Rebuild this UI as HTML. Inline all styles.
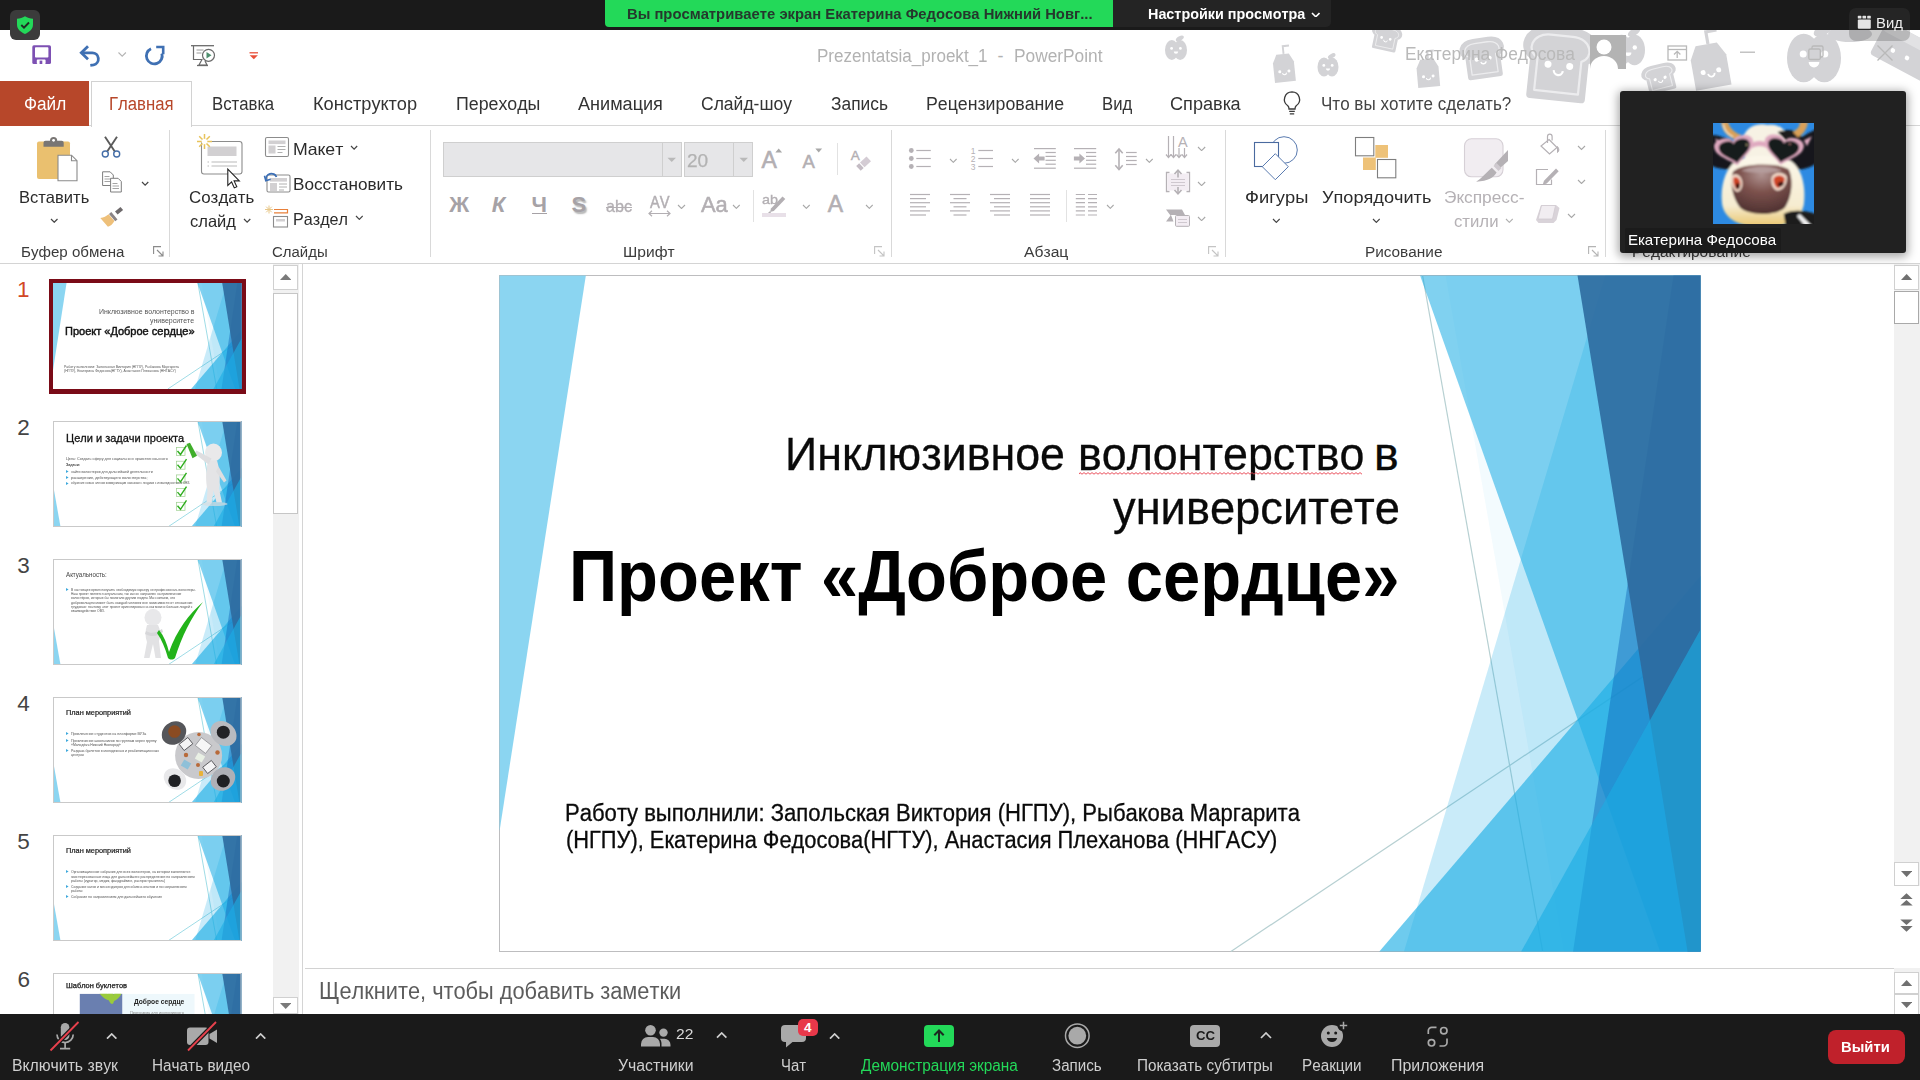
<!DOCTYPE html>
<html lang="ru"><head><meta charset="utf-8"><title>Zoom - PowerPoint</title>
<style>
html,body{margin:0;padding:0;background:#fff;}
body{width:1920px;height:1080px;overflow:hidden;position:relative;font-family:"Liberation Sans",sans-serif;}
.t{position:absolute;white-space:nowrap;line-height:1;transform-origin:0 0;font-kerning:none;}

</style></head><body>
<div id="ppt-head"><svg style="position:absolute;left:0.0px;top:30.0px;" width="1920" height="95" viewBox="0 30 1920 95"><g fill="#d3d3d6"><ellipse cx="1171.8" cy="50.0" rx="6.8" ry="9.9"/><ellipse cx="1180.2" cy="50.0" rx="6.8" ry="9.9"/><ellipse cx="1179.8" cy="38.5" rx="4.4" ry="2.2" transform="rotate(-30 1179.8 38.5)"/></g><g fill="#fff"><circle cx="1171.6" cy="48.4" r="1.4"/><circle cx="1180.4" cy="48.4" r="1.4"/><path d="M1173.8 51.6 a2.2 2.2 0 0 0 4.4 0" /></g><g transform="rotate(-6 1284 68)"><path d="M1273.5 62.4 L1277.7 54.0 L1290.3 54.0 L1294.5 62.4 L1294.5 82.0 L1273.5 82.0 Z" fill="#d3d3d6"/><path d="M1285.0 54.0 L1285.0 46.2 L1291.3 46.2" fill="none" stroke="#d3d3d6" stroke-width="1.9"/><circle cx="1279.4" cy="71.4" r="1.5" fill="#fff"/><circle cx="1288.6" cy="71.4" r="1.5" fill="#fff"/><path d="M1282.1 72.8 a1.9 1.9 0 0 0 3.8 0" fill="none" stroke="#fff" stroke-width="1.1"/></g><g fill="#d3d3d6"><ellipse cx="1324.0" cy="67.0" rx="6.5" ry="9.5"/><ellipse cx="1332.0" cy="67.0" rx="6.5" ry="9.5"/><ellipse cx="1331.7" cy="56.0" rx="4.2" ry="2.1" transform="rotate(-30 1331.7 56.0)"/></g><g fill="#fff"><circle cx="1323.8" cy="65.4" r="1.4"/><circle cx="1332.2" cy="65.4" r="1.4"/><path d="M1325.9 68.6 a2.1 2.1 0 0 0 4.2 0" /></g><g transform="rotate(12 1386 38)"><path d="M1375.6 49.0 L1375.6 36.2 C1369.9 34.5 1371.4 27.0 1380.8 27.0 L1391.2 27.0 C1400.6 27.0 1402.1 34.5 1396.4 36.2 L1396.4 49.0 Z" fill="#d3d3d6" stroke="#d3d3d6" stroke-width="3.1" stroke-linejoin="round"/><path d="M1377.1 47.5 L1377.1 36.5 C1372.1 35.0 1373.5 28.5 1381.5 28.5 L1390.5 28.5 C1398.5 28.5 1399.9 35.0 1394.9 36.5 L1394.9 47.5 Z" fill="none" stroke="#ececee" stroke-width="0.9" stroke-linejoin="round"/><circle cx="1381.6" cy="38.4" r="1.4" fill="#fff"/><circle cx="1390.4" cy="38.4" r="1.4" fill="#fff"/><path d="M1384.2 40.2 a1.8 1.8 0 0 0 3.6 0" fill="none" stroke="#fff" stroke-width="0.9"/></g><g transform="rotate(-5 1428 73)"><path d="M1417.0 67.4 L1421.4 59.0 L1434.6 59.0 L1439.0 67.4 L1439.0 87.0 L1417.0 87.0 Z" fill="#d3d3d6"/><path d="M1429.1 59.0 L1429.1 51.2 L1435.7 51.2" fill="none" stroke="#d3d3d6" stroke-width="2.0"/><circle cx="1423.2" cy="76.4" r="1.5" fill="#fff"/><circle cx="1432.8" cy="76.4" r="1.5" fill="#fff"/><path d="M1426.0 77.8 a2.0 2.0 0 0 0 4.0 0" fill="none" stroke="#fff" stroke-width="1.1"/></g><g transform="rotate(-8 1483 58)"><path d="M1467.8 76.0 L1467.8 55.1 C1459.4 52.2 1461.7 40.0 1475.4 40.0 L1490.6 40.0 C1504.3 40.0 1506.6 52.2 1498.2 55.1 L1498.2 76.0 Z" fill="#d3d3d6" stroke="#d3d3d6" stroke-width="4.6" stroke-linejoin="round"/><path d="M1469.9 73.5 L1469.9 55.5 C1462.7 53.0 1464.7 42.5 1476.5 42.5 L1489.5 42.5 C1501.3 42.5 1503.3 53.0 1496.1 55.5 L1496.1 73.5 Z" fill="none" stroke="#ececee" stroke-width="1.3" stroke-linejoin="round"/><circle cx="1476.5" cy="58.7" r="2.1" fill="#fff"/><circle cx="1489.5" cy="58.7" r="2.1" fill="#fff"/><path d="M1480.3 61.6 a2.7 2.7 0 0 0 5.3 0" fill="none" stroke="#fff" stroke-width="1.3"/></g><g transform="rotate(6 1559 64)"><path d="M1533.4 97.0 L1533.4 58.7 C1519.3 53.4 1523.2 31.0 1546.2 31.0 L1571.8 31.0 C1594.8 31.0 1598.7 53.4 1584.6 58.7 L1584.6 97.0 Z" fill="#d3d3d6" stroke="#d3d3d6" stroke-width="7.7" stroke-linejoin="round"/><path d="M1537.0 92.4 L1537.0 59.5 C1524.9 54.9 1528.2 35.6 1548.0 35.6 L1570.0 35.6 C1589.8 35.6 1593.1 54.9 1581.0 59.5 L1581.0 92.4 Z" fill="none" stroke="#ececee" stroke-width="2.2" stroke-linejoin="round"/><circle cx="1548.1" cy="65.3" r="3.5" fill="#fff"/><circle cx="1569.9" cy="65.3" r="3.5" fill="#fff"/><path d="M1554.5 70.6 a4.5 4.5 0 0 0 9.0 0" fill="none" stroke="#fff" stroke-width="2.2"/></g><g fill="#d3d3d6"><ellipse cx="1621.5" cy="50.0" rx="10.5" ry="15.3"/><ellipse cx="1634.5" cy="50.0" rx="10.5" ry="15.3"/><ellipse cx="1634.0" cy="32.1" rx="6.8" ry="3.4" transform="rotate(-30 1634.0 32.1)"/></g><g fill="#fff"><circle cx="1621.2" cy="47.5" r="2.2"/><circle cx="1634.8" cy="47.5" r="2.2"/><path d="M1624.6 52.5 a3.4 3.4 0 0 0 6.8 0" /></g><g transform="rotate(-14 1660 78)"><path d="M1648.0 90.0 L1648.0 76.1 C1641.4 74.2 1643.2 66.0 1654.0 66.0 L1666.0 66.0 C1676.8 66.0 1678.6 74.2 1672.0 76.1 L1672.0 90.0 Z" fill="#d3d3d6" stroke="#d3d3d6" stroke-width="3.6" stroke-linejoin="round"/><path d="M1649.7 88.3 L1649.7 76.3 C1644.0 74.7 1645.6 67.7 1654.8 67.7 L1665.2 67.7 C1674.4 67.7 1676.0 74.7 1670.3 76.3 L1670.3 88.3 Z" fill="none" stroke="#ececee" stroke-width="1.1" stroke-linejoin="round"/><circle cx="1654.9" cy="78.5" r="1.6" fill="#fff"/><circle cx="1665.1" cy="78.5" r="1.6" fill="#fff"/><path d="M1657.9 80.4 a2.1 2.1 0 0 0 4.2 0" fill="none" stroke="#fff" stroke-width="1.1"/></g><g transform="rotate(-10 1710 66)"><path d="M1692.0 57.2 L1699.2 44.0 L1720.8 44.0 L1728.0 57.2 L1728.0 88.0 L1692.0 88.0 Z" fill="#d3d3d6"/><path d="M1711.8 44.0 L1711.8 31.7 L1722.6 31.7" fill="none" stroke="#d3d3d6" stroke-width="3.2"/><circle cx="1702.1" cy="71.3" r="2.5" fill="#fff"/><circle cx="1717.9" cy="71.3" r="2.5" fill="#fff"/><path d="M1706.8 73.5 a3.2 3.2 0 0 0 6.5 0" fill="none" stroke="#fff" stroke-width="1.8"/></g><g fill="#d3d3d6"><ellipse cx="1803.7" cy="58.0" rx="16.7" ry="24.3"/><ellipse cx="1824.3" cy="58.0" rx="16.7" ry="24.3"/><ellipse cx="1823.5" cy="29.6" rx="10.8" ry="5.4" transform="rotate(-30 1823.5 29.6)"/></g><g fill="#fff"><circle cx="1803.2" cy="54.0" r="3.5"/><circle cx="1824.8" cy="54.0" r="3.5"/><path d="M1808.6 62.0 a5.4 5.4 0 0 0 10.8 0" /></g><g transform="rotate(28 1900 52)"><rect x="1874" y="30" width="62" height="38" rx="4" fill="#d3d3d6"/><rect x="1874" y="30" width="62" height="11" rx="4" fill="#e2e2e4"/><circle cx="1893" cy="54" r="2.300" fill="#fff"/><circle cx="1909" cy="54" r="2.300" fill="#fff"/></g><ellipse cx="1850" cy="34" rx="22" ry="8" fill="#d3d3d6"/></svg><svg style="position:absolute;left:0.0px;top:40.0px;" width="270" height="30" viewBox="0 40 270 30"><rect x="32.3" y="45.300" width="18.700" height="18.700" rx="1.600" fill="#7d50b3"/><rect x="35" y="47.300" width="13.400" height="10.300" rx="0.800" fill="#fff"/><rect x="36.800" y="59.600" width="8.800" height="4.400" rx="0.800" fill="#fff"/><rect x="39.600" y="60.600" width="2.700" height="3.400" fill="#7d50b3"/><path d="M82 52.800 H92.300 a6.100 6.100 0 0 1 1.300 12.050 l-3.300 0.450" fill="none" stroke="#3f70b3" stroke-width="2.800"/><path d="M88 46.300 L81.300 52.800 L88 59.300" fill="none" stroke="#3f70b3" stroke-width="2.800"/><path d="M118.500 52.500 l3.700 3.700 l3.700 -3.700" fill="none" stroke="#b4b4b4" stroke-width="1.100"/><path d="M151 48.800 a7.900 7.900 0 1 0 10.800 4.700" fill="none" stroke="#3f70b3" stroke-width="2.800"/><path d="M156.200 47 H163.200 V54.200" fill="none" stroke="#3f70b3" stroke-width="2.600"/><path d="M191 45.7 h23" stroke="#6a6a6a" stroke-width="1.3"/><path d="M193.5 46 v13.5 h9" fill="none" stroke="#6a6a6a" stroke-width="1.2"/><path d="M196.5 50 h7 M196.5 53 h5" stroke="#9a9a9a" stroke-width="1"/><circle cx="208.5" cy="55.3" r="6" fill="#fff" stroke="#6a6a6a" stroke-width="1.2"/><path d="M206.5 52 l5 3.3 l-5 3.3z" fill="#4e8f6e"/><path d="M202 59.5 l-3 5.5 h8 l-2 -4" fill="none" stroke="#6a6a6a" stroke-width="1.2"/><path d="M197 65.5 h11" stroke="#6a6a6a" stroke-width="1.3"/><path d="M249.5 52.8 h8.5" stroke="#e8503a" stroke-width="1.3"/><path d="M249.7 55.3 h8.2 l-4.1 4z" fill="#e8503a"/></svg><span class="t" style="left:816.5px;top:47.0px;font-size:18px;color:#b2b2b2;font-weight:400;font-family:'Liberation Sans', sans-serif;transform:scaleX(0.9471);">Prezentatsia_proekt_1</span><span class="t" style="left:996.7px;top:47.0px;font-size:18px;color:#b2b2b2;font-weight:400;font-family:'Liberation Sans', sans-serif;transform:translateX(0.79px);">-</span><span class="t" style="left:1014.3px;top:47.0px;font-size:18px;color:#b2b2b2;font-weight:400;font-family:'Liberation Sans', sans-serif;transform:scaleX(0.9617);">PowerPoint</span><span class="t" style="left:1404.6px;top:45.0px;font-size:18px;color:#b9b9b9;font-weight:400;font-family:'Liberation Sans', sans-serif;transform:scaleX(0.9658);">Екатерина Федосова</span><svg style="position:absolute;left:1590.0px;top:35.0px;" width="36" height="34" viewBox="0 0 36 34"><rect width="36" height="34" fill="#b3b3b3"/><circle cx="14" cy="12" r="7.5" fill="#fff"/><path d="M0 34 a14 13 0 0 1 28 0 z" fill="#fff"/></svg><svg style="position:absolute;left:1660.0px;top:40.0px;" width="240" height="26" viewBox="1660 40 240 26"><g fill="none" stroke="#b9b9b9" stroke-width="1.3"><rect x="1668" y="46" width="18.5" height="14"/><path d="M1668 49.5 h18.5"/><path d="M1677.2 58 v-6.5 M1674 54.5 l3.2 -3.2 l3.2 3.2"/><path d="M1740 52.2 h15"/><rect x="1808.8" y="49" width="11.5" height="10.5" rx="1.5"/><path d="M1812 49 v-1.5 a1.5 1.5 0 0 1 1.5 -1.5 h8 a1.5 1.5 0 0 1 1.5 1.5 v8 a1.5 1.5 0 0 1 -1.5 1.5 h-1.2"/><path d="M1877.5 45.5 l15 15 M1892.5 45.5 l-15 15"/></g></svg><div style="position:absolute;left:0.0px;top:125.0px;width:1920.0px;height:1.0px;background:#d6d6d6"></div><div style="position:absolute;left:0.0px;top:81.0px;width:89.0px;height:44.5px;background:#b7472a"></div><span class="t" style="left:23.7px;top:95.0px;font-size:18px;color:#fff;font-weight:400;font-family:'Liberation Sans', sans-serif;transform:scaleX(0.9541);">Файл</span><div style="position:absolute;left:91.0px;top:81.0px;width:100.5px;height:45.5px;background:#fff;border:1px solid #d2d2d2;border-bottom:none;box-sizing:border-box"></div><span class="t" style="left:108.5px;top:95.0px;font-size:18px;color:#b7472a;font-weight:400;font-family:'Liberation Sans', sans-serif;transform:scaleX(0.9283);">Главная</span><span class="t" style="left:211.9px;top:95.0px;font-size:18px;color:#333;font-weight:400;font-family:'Liberation Sans', sans-serif;transform:scaleX(0.9310);">Вставка</span><span class="t" style="left:312.7px;top:95.0px;font-size:18px;color:#333;font-weight:400;font-family:'Liberation Sans', sans-serif;transform:scaleX(1.0124);">Конструктор</span><span class="t" style="left:456.0px;top:95.0px;font-size:18px;color:#333;font-weight:400;font-family:'Liberation Sans', sans-serif;transform:scaleX(0.9880);">Переходы</span><span class="t" style="left:578.3px;top:95.0px;font-size:18px;color:#333;font-weight:400;font-family:'Liberation Sans', sans-serif;transform:scaleX(1.0045);">Анимация</span><span class="t" style="left:701.0px;top:95.0px;font-size:18px;color:#333;font-weight:400;font-family:'Liberation Sans', sans-serif;transform:scaleX(0.9732);">Слайд-шоу</span><span class="t" style="left:830.6px;top:95.0px;font-size:18px;color:#333;font-weight:400;font-family:'Liberation Sans', sans-serif;transform:scaleX(0.9641);">Запись</span><span class="t" style="left:925.9px;top:95.0px;font-size:18px;color:#333;font-weight:400;font-family:'Liberation Sans', sans-serif;transform:scaleX(0.9849);">Рецензирование</span><span class="t" style="left:1101.7px;top:95.0px;font-size:18px;color:#333;font-weight:400;font-family:'Liberation Sans', sans-serif;transform:scaleX(0.9267);">Вид</span><span class="t" style="left:1170.0px;top:95.0px;font-size:18px;color:#333;font-weight:400;font-family:'Liberation Sans', sans-serif;transform:scaleX(1.0069);">Справка</span><svg style="position:absolute;left:1281.0px;top:90.0px;" width="22" height="27" viewBox="0 0 22 27"><path d="M11 1.8 a7.6 7.6 0 0 1 4.2 13.9 c-1 0.9 -1.2 1.8 -1.2 3.3 h-6 c0 -1.5 -0.2 -2.4 -1.2 -3.3 a7.6 7.6 0 0 1 4.2 -13.9z" fill="none" stroke="#3a3a3a" stroke-width="1.3"/><path d="M8.2 21.3 h5.6 M8.8 23.8 h4.4" stroke="#3a3a3a" stroke-width="1.3"/></svg><span class="t" style="left:1320.5px;top:95.0px;font-size:18px;color:#444;font-weight:400;font-family:'Liberation Sans', sans-serif;transform:scaleX(0.9467);">Что вы хотите сделать?</span></div>
<div id="ribbon-a"><div style="position:absolute;left:0.0px;top:263.0px;width:1920.0px;height:1.0px;background:#d4d4d4"></div><div style="position:absolute;left:169.0px;top:130.0px;width:1.0px;height:127.0px;background:#d9d9d9"></div><div style="position:absolute;left:429.8px;top:130.0px;width:1.0px;height:127.0px;background:#d9d9d9"></div><div style="position:absolute;left:890.8px;top:130.0px;width:1.0px;height:127.0px;background:#d9d9d9"></div><div style="position:absolute;left:1225.0px;top:130.0px;width:1.0px;height:127.0px;background:#d9d9d9"></div><div style="position:absolute;left:1605.0px;top:130.0px;width:1.0px;height:127.0px;background:#d9d9d9"></div><svg style="position:absolute;left:30.0px;top:130.0px;" width="100" height="100" viewBox="30 130 100 100"><rect x="37" y="141.5" width="33" height="37.5" rx="2" fill="#eac06f"/><path d="M43.5 146.7 v-4 a2 2 0 0 1 2 -2 h4.5 a3.6 3.6 0 0 1 7.200 0 h4.500 a2 2 0 0 1 2 2 v4z" fill="#797674"/><circle cx="53.6" cy="140.3" r="1.4" fill="#fff"/><path d="M58 155.2 h13.5 l5.500 5.500 v20 h-19z" fill="#fff" stroke="#8a8a8a" stroke-width="1.1"/><path d="M71.5 155.2 v5.500 h5.500" fill="none" stroke="#8a8a8a" stroke-width="1.1"/><path d="M105 136.8 L114.800 151.500 M117 136.800 L107.200 151.500" stroke="#5a5a5a" stroke-width="1.900"/><circle cx="105.3" cy="154" r="3" fill="none" stroke="#456ea8" stroke-width="1.400"/><circle cx="116.7" cy="154" r="3" fill="none" stroke="#456ea8" stroke-width="1.400"/><path d="M102.6 171.8 h7.500 l3.200 3.200 v10.500 h-10.700z" fill="#fff" stroke="#7e7e7e" stroke-width="1"/><path d="M104.5 176.500 h5 M104.500 179 h6.500 M104.500 181.500 h6.500" stroke="#9a9a9a" stroke-width="0.900"/><path d="M110.6 178.300 h7.500 l3.200 3.200 v10.500 h-10.700z" fill="#fff" stroke="#7e7e7e" stroke-width="1"/><path d="M112.5 183.500 h5 M112.500 186 h6.500 M112.500 188.500 h6.500" stroke="#9a9a9a" stroke-width="0.900"/><path d="M115 211.500 l5.500 -4.600 l2.600 3.100 l-5.500 4.600z" fill="#6e6a6c"/><path d="M111.300 212 l6.200 7.400 l-2.300 1.900 l-6.200 -7.400z" fill="#8a8486"/><path d="M108.600 214.200 l5.800 6.900 c-2 3.500 -4 5 -6.500 5.600 l-7.600 -8.700 c3.500 -0.500 6 -1.800 8.300 -3.800z" fill="#eec07a"/></svg><span class="t" style="left:19.1px;top:189.0px;font-size:16.5px;color:#2b2b2b;font-weight:400;font-family:'Liberation Sans', sans-serif;transform:scaleX(1.0016);">Вставить</span><svg style="position:absolute;left:50.0px;top:217.7px;" width="8.5" height="5.25" viewBox="0 0 8.5 5.25"><path d="M1 1 L4.25 4.25 L7.50 1" fill="none" stroke="#444" stroke-width="1.2"/></svg><svg style="position:absolute;left:140.7px;top:180.7px;" width="8.300000000000011" height="5.150000000000006" viewBox="0 0 8.300000000000011 5.150000000000006"><path d="M1 1 L4.15 4.15 L7.30 1" fill="none" stroke="#444" stroke-width="1.2"/></svg><span class="t" style="left:20.8px;top:244.0px;font-size:15.5px;color:#3b3b3b;font-weight:400;font-family:'Liberation Sans', sans-serif;transform:scaleX(0.9746);">Буфер обмена</span><svg style="position:absolute;left:152.5px;top:246.0px;" width="12" height="11" viewBox="0 0 12 11"><path d="M0.6 8 V0.6 H8" fill="none" stroke="#8a8a8a" stroke-width="1.1"/><path d="M4 4 L10 10 M10 5.5 V10 H5.5" fill="none" stroke="#8a8a8a" stroke-width="1.1"/></svg><svg style="position:absolute;left:190.0px;top:130.0px;" width="110" height="100" viewBox="190 130 110 100"><rect x="201.500" y="141.500" width="40.500" height="32.500" rx="2.500" fill="#fff" stroke="#8c8c8c" stroke-width="1.100"/><rect x="207.500" y="146.500" width="29" height="9.500" fill="#d2d0d2"/><path d="M207.500 162 h1.500 M211.500 162 h25.500 M207.500 166 h1.500 M211.500 166 h25.500" stroke="#b9b9b9" stroke-width="1"/><g stroke="#e8c35a" stroke-width="1.500"><path d="M204.500 134 v15 M197 141.500 h15 M199.200 136.200 l10.600 10.600 M209.800 136.200 l-10.600 10.600"/></g><circle cx="204.500" cy="141.500" r="2.800" fill="#fff"/><rect x="265.5" y="137.5" width="23" height="19" rx="1.500" fill="#fff" stroke="#8c8c8c" stroke-width="1.100"/><rect x="268.5" y="140.5" width="17" height="3.600" fill="#d2d0d2"/><rect x="268.5" y="145.5" width="7" height="8" fill="#d2d0d2"/><path d="M277.5 146.5 h8 M277.5 149.5 h8 M277.5 152.5 h5" stroke="#b0b0b0" stroke-width="1"/><rect x="267.0" y="175.0" width="23" height="17" rx="1.500" fill="#fff" stroke="#8c8c8c" stroke-width="1.100"/><rect x="270.0" y="178.0" width="17" height="3.600" fill="#d2d0d2"/><rect x="270.0" y="183.0" width="7" height="8" fill="#d2d0d2"/><path d="M279.0 184.0 h8 M279.0 187.0 h8 M279.0 190.0 h5" stroke="#b0b0b0" stroke-width="1"/><path d="M266 180 a5.500 5.500 0 0 1 10.500 -3" fill="none" stroke="#3c6fb5" stroke-width="1.800"/><path d="M264.500 175.800 l1.300 5 l4.800 -1.600" fill="none" stroke="#3c6fb5" stroke-width="1.600"/><rect x="273.500" y="216.500" width="14" height="10.500" fill="#fff" stroke="#8c8c8c" stroke-width="1.100"/><rect x="276" y="219" width="9" height="2.500" fill="#d2d0d2"/><path d="M274 209.500 h13.500 v3.300 h-13.500" fill="none" stroke="#e8803a" stroke-width="1.200"/><g stroke="#e8c88a" stroke-width="1"><path d="M269 205.500 v8 M265 209.500 h8 M266.200 206.700 l5.600 5.600 M271.800 206.700 l-5.600 5.600"/></g><path d="M227.800 169 v16.500 l3.800 -3.600 l2.700 6 l2.500 -1.100 l-2.700 -5.900 h5.200z" fill="#fff" stroke="#222" stroke-width="1.100"/></svg><span class="t" style="left:188.6px;top:189.0px;font-size:16.5px;color:#2b2b2b;font-weight:400;font-family:'Liberation Sans', sans-serif;transform:scaleX(1.0252);">Создать</span><span class="t" style="left:189.9px;top:213.0px;font-size:16.5px;color:#2b2b2b;font-weight:400;font-family:'Liberation Sans', sans-serif;transform:scaleX(1.0003);">слайд</span><svg style="position:absolute;left:242.7px;top:217.7px;" width="8.300000000000011" height="5.150000000000006" viewBox="0 0 8.300000000000011 5.150000000000006"><path d="M1 1 L4.15 4.15 L7.30 1" fill="none" stroke="#444" stroke-width="1.2"/></svg><span class="t" style="left:293.3px;top:141.0px;font-size:16.5px;color:#2b2b2b;font-weight:400;font-family:'Liberation Sans', sans-serif;transform:scaleX(1.0727);">Макет</span><svg style="position:absolute;left:349.8px;top:145.2px;" width="8.199999999999989" height="5.099999999999994" viewBox="0 0 8.199999999999989 5.099999999999994"><path d="M1 1 L4.10 4.10 L7.20 1" fill="none" stroke="#444" stroke-width="1.2"/></svg><span class="t" style="left:293.3px;top:176.0px;font-size:16.5px;color:#2b2b2b;font-weight:400;font-family:'Liberation Sans', sans-serif;transform:scaleX(1.0388);">Восстановить</span><span class="t" style="left:293.3px;top:211.0px;font-size:16.5px;color:#2b2b2b;font-weight:400;font-family:'Liberation Sans', sans-serif;transform:scaleX(0.9788);">Раздел</span><svg style="position:absolute;left:354.8px;top:215.1px;" width="8.699999999999989" height="5.349999999999994" viewBox="0 0 8.699999999999989 5.349999999999994"><path d="M1 1 L4.35 4.35 L7.70 1" fill="none" stroke="#444" stroke-width="1.2"/></svg><span class="t" style="left:271.6px;top:244.0px;font-size:15.5px;color:#3b3b3b;font-weight:400;font-family:'Liberation Sans', sans-serif;transform:scaleX(0.9639);">Слайды</span><div style="position:absolute;left:443.0px;top:142.0px;width:238.7px;height:34.7px;background:#e6e6e8;border:1px solid #cfcfcf;box-sizing:border-box"></div><div style="position:absolute;left:662.0px;top:143.0px;width:1.0px;height:32.7px;background:#cfcfcf"></div><div style="position:absolute;left:684.2px;top:142.0px;width:68.6px;height:34.7px;background:#e6e6e8;border:1px solid #cfcfcf;box-sizing:border-box"></div><div style="position:absolute;left:733.3px;top:143.0px;width:1.0px;height:32.7px;background:#cfcfcf"></div><svg style="position:absolute;left:667.0px;top:157.0px;" width="10" height="6" viewBox="0 0 10 6"><path d="M0.500 0.800 h8.500 l-4.250 4.300z" fill="#b9b9b9"/></svg><svg style="position:absolute;left:738.5px;top:157.0px;" width="10" height="6" viewBox="0 0 10 6"><path d="M0.500 0.800 h8.500 l-4.250 4.300z" fill="#b9b9b9"/></svg><span class="t" style="left:686.5px;top:152.0px;font-size:18px;color:#b2b2b2;font-weight:400;font-family:'Liberation Sans', sans-serif;transform:scaleX(1.0590);-webkit-text-stroke:0.25px #b2b2b2;">20</span><span class="t" style="left:759.7px;top:149.0px;font-size:23px;color:#b3afb3;font-weight:400;font-family:'Liberation Sans', sans-serif;transform:translateX(1.77px);-webkit-text-stroke:0.6px #b3afb3;">A</span><svg style="position:absolute;left:775.0px;top:147.5px;" width="8" height="5" viewBox="0 0 8 5"><path d="M0.300 4.500 l3.400 -4 l3.400 4z" fill="#a8a8a8"/></svg><span class="t" style="left:801.0px;top:153.0px;font-size:18.5px;color:#b3afb3;font-weight:400;font-family:'Liberation Sans', sans-serif;transform:translateX(1.52px);-webkit-text-stroke:0.55px #b3afb3;">A</span><svg style="position:absolute;left:814.5px;top:147.5px;" width="8" height="5" viewBox="0 0 8 5"><path d="M0.300 0.500 h6.800 l-3.400 4z" fill="#a8a8a8"/></svg><div style="position:absolute;left:837.0px;top:143.0px;width:1.0px;height:32.0px;background:#e2e2e2"></div><span class="t" style="left:849.8px;top:149.0px;font-size:13.5px;color:#b3afb3;font-weight:400;font-family:'Liberation Sans', sans-serif;transform:translateX(0.99px);-webkit-text-stroke:0.4px #b3afb3;">A</span><svg style="position:absolute;left:852.0px;top:153.0px;" width="20" height="18" viewBox="0 0 20 18"><path d="M8 9.500 l6.500 -6 l4.500 4.800 l-6.500 6z" fill="#d4ccd4"/><path d="M7.200 10.300 l-3 2.700 l4.500 4.800 l3 -2.700z" fill="#c4bcc4"/></svg><span class="t" style="left:446.8px;top:194.0px;font-size:22px;color:#a6a2a6;font-weight:700;font-family:'Liberation Sans', sans-serif;transform:translateX(2.36px);">Ж</span><span class="t" style="left:489.6px;top:194.0px;font-size:22px;color:#a6a2a6;font-weight:700;font-family:'Liberation Sans', sans-serif;font-style:italic;transform:translateX(2.16px);">К</span><span class="t" style="left:530.5px;top:194.0px;font-size:22px;color:#a6a2a6;font-weight:700;font-family:'Liberation Sans', sans-serif;transform:translateX(1.01px);">Ч</span><div style="position:absolute;left:531.5px;top:213.0px;width:15.0px;height:1.3px;background:#a6a2a6"></div><span class="t" style="left:571.3px;top:194.0px;font-size:22px;color:#a6a2a6;font-weight:700;font-family:'Liberation Sans', sans-serif;transform:translateX(0.21px);text-shadow:1.5px 1.5px 1.5px rgba(120,120,120,0.55);">S</span><span class="t" style="left:605.8px;top:198.0px;font-size:16.5px;color:#b3afb3;font-weight:400;font-family:'Liberation Sans', sans-serif;transform:scaleX(0.9783);-webkit-text-stroke:0.3px #b3afb3;">abc</span><div style="position:absolute;left:606.0px;top:206.5px;width:26.0px;height:1.1px;background:#b3afb3"></div><span class="t" style="left:649.6px;top:195.0px;font-size:16px;color:#b3afb3;font-weight:400;font-family:'Liberation Sans', sans-serif;transform:scaleX(0.9171);-webkit-text-stroke:0.45px #b3afb3;">AV</span><svg style="position:absolute;left:648.0px;top:210.0px;" width="23" height="7" viewBox="0 0 23 7"><path d="M1 3.500 h21 M4 0.800 l-3 2.700 l3 2.700 M19 0.800 l3 2.700 l-3 2.700" fill="none" stroke="#b3afb3" stroke-width="1.200"/></svg><svg style="position:absolute;left:677.0px;top:203.6px;" width="9" height="5.5" viewBox="0 0 9 5.5"><path d="M1 1 L4.50 4.50 L8.00 1" fill="none" stroke="#a8a8a8" stroke-width="1.1"/></svg><span class="t" style="left:700.5px;top:195.0px;font-size:21.5px;color:#b3afb3;font-weight:400;font-family:'Liberation Sans', sans-serif;transform:scaleX(1.0179);-webkit-text-stroke:0.5px #b3afb3;">Aa</span><svg style="position:absolute;left:732.0px;top:203.6px;" width="8.700000000000045" height="5.350000000000023" viewBox="0 0 8.700000000000045 5.350000000000023"><path d="M1 1 L4.35 4.35 L7.70 1" fill="none" stroke="#a8a8a8" stroke-width="1.1"/></svg><div style="position:absolute;left:753.0px;top:190.0px;width:1.0px;height:32.0px;background:#e2e2e2"></div><span class="t" style="left:761.8px;top:193.0px;font-size:13.5px;color:#b3afb3;font-weight:400;font-family:'Liberation Sans', sans-serif;transform:scaleX(1.0657);-webkit-text-stroke:0.35px #b3afb3;">ab</span><svg style="position:absolute;left:764.0px;top:194.0px;" width="24" height="24" viewBox="0 0 24 24"><path d="M18.500 2.500 l2.800 2.500 l-11.500 12 l-3.800 1 l1 -3.500z" fill="#b3afb3"/><path d="M5.800 17.200 l-1.800 1.800 h3.200z" fill="#b3afb3"/></svg><div style="position:absolute;left:762.0px;top:213.3px;width:24.0px;height:3.4px;background:#e8e0e8"></div><svg style="position:absolute;left:802.3px;top:203.6px;" width="8.700000000000045" height="5.350000000000023" viewBox="0 0 8.700000000000045 5.350000000000023"><path d="M1 1 L4.35 4.35 L7.70 1" fill="none" stroke="#a8a8a8" stroke-width="1.1"/></svg><span class="t" style="left:826.2px;top:193.0px;font-size:23px;color:#b3afb3;font-weight:400;font-family:'Liberation Sans', sans-serif;transform:translateX(1.66px);-webkit-text-stroke:0.6px #b3afb3;">A</span><svg style="position:absolute;left:864.8px;top:203.6px;" width="8.700000000000045" height="5.350000000000023" viewBox="0 0 8.700000000000045 5.350000000000023"><path d="M1 1 L4.35 4.35 L7.70 1" fill="none" stroke="#a8a8a8" stroke-width="1.1"/></svg><span class="t" style="left:622.8px;top:244.0px;font-size:15.5px;color:#3b3b3b;font-weight:400;font-family:'Liberation Sans', sans-serif;transform:scaleX(1.0060);">Шрифт</span><svg style="position:absolute;left:874.0px;top:246.0px;" width="12" height="11" viewBox="0 0 12 11"><path d="M0.6 8 V0.6 H8" fill="none" stroke="#c4c4c4" stroke-width="1.1"/><path d="M4 4 L10 10 M10 5.5 V10 H5.5" fill="none" stroke="#c4c4c4" stroke-width="1.1"/></svg></div>
<div id="ribbon-b"><svg style="position:absolute;left:900.0px;top:130.0px;" width="300" height="100" viewBox="900 130 300 100"><circle cx="911.3" cy="150.5" r="2.400" fill="#b5b1b5"/><path d="M916.3 150.5 H930.800" stroke="#b5b1b5" stroke-width="1.200"/><circle cx="911.3" cy="158.5" r="2.400" fill="#b5b1b5"/><path d="M916.3 158.5 H930.800" stroke="#b5b1b5" stroke-width="1.200"/><circle cx="911.3" cy="166.5" r="2.400" fill="#b5b1b5"/><path d="M916.3 166.5 H930.800" stroke="#b5b1b5" stroke-width="1.200"/><text x="970.800" y="153.7" font-size="8.500" fill="#b5b1b5" font-family="Liberation Sans, sans-serif">1</text><path d="M978.300 150.5 H993" stroke="#b5b1b5" stroke-width="1.200"/><text x="970.800" y="161.7" font-size="8.500" fill="#b5b1b5" font-family="Liberation Sans, sans-serif">2</text><path d="M978.300 158.5 H993" stroke="#b5b1b5" stroke-width="1.200"/><text x="970.800" y="169.7" font-size="8.500" fill="#b5b1b5" font-family="Liberation Sans, sans-serif">3</text><path d="M978.300 166.5 H993" stroke="#b5b1b5" stroke-width="1.200"/><path d="M1034 148.6 H1055.8" stroke="#b5b1b5" stroke-width="1.2"/><path d="M1034 168.2 H1055.8" stroke="#b5b1b5" stroke-width="1.2"/><path d="M1045.5 152.5 H1055.8" stroke="#b5b1b5" stroke-width="1.2"/><path d="M1045.5 156.4 H1055.8" stroke="#b5b1b5" stroke-width="1.2"/><path d="M1045.5 160.3 H1055.8" stroke="#b5b1b5" stroke-width="1.2"/><path d="M1045.5 164.2 H1055.8" stroke="#b5b1b5" stroke-width="1.2"/><path d="M1033.500 158.400 l5.600 -5 v3 h5.500 v4 h-5.500 v3z" fill="#b5b1b5"/><path d="M1074 148.6 H1096.2" stroke="#b5b1b5" stroke-width="1.2"/><path d="M1074 168.2 H1096.2" stroke="#b5b1b5" stroke-width="1.2"/><path d="M1086 152.5 H1096.2" stroke="#b5b1b5" stroke-width="1.2"/><path d="M1086 156.4 H1096.2" stroke="#b5b1b5" stroke-width="1.2"/><path d="M1086 160.3 H1096.2" stroke="#b5b1b5" stroke-width="1.2"/><path d="M1086 164.2 H1096.2" stroke="#b5b1b5" stroke-width="1.2"/><path d="M1085 158.400 l-5.600 -5 v3 h-5.500 v4 h5.500 v3z" fill="#b5b1b5"/><path d="M1119 149.500 V169" stroke="#b5b1b5" stroke-width="1.600"/><path d="M1115.300 153.300 l3.700 -4.300 l3.700 4.300 M1115.300 165.200 l3.700 4.300 l3.700 -4.300" fill="none" stroke="#b5b1b5" stroke-width="1.600"/><path d="M1126 152.5 H1136.7" stroke="#b5b1b5" stroke-width="1.2"/><path d="M1126 156.5 H1136.7" stroke="#b5b1b5" stroke-width="1.2"/><path d="M1126 160.5 H1136.7" stroke="#b5b1b5" stroke-width="1.2"/><path d="M1126 164.5 H1136.7" stroke="#b5b1b5" stroke-width="1.2"/><path d="M910 194.5 H930" stroke="#b5b1b5" stroke-width="1.200"/><path d="M950 194.5 H970" stroke="#b5b1b5" stroke-width="1.200"/><path d="M990 194.5 H1010" stroke="#b5b1b5" stroke-width="1.200"/><path d="M1030 194.5 H1050" stroke="#b5b1b5" stroke-width="1.200"/><path d="M1075.800 194.5 H1085 M1088 194.5 H1097" stroke="#b5b1b5" stroke-width="1.200"/><path d="M910 198.6 H926" stroke="#b5b1b5" stroke-width="1.200"/><path d="M953.5 198.6 H966.5" stroke="#b5b1b5" stroke-width="1.200"/><path d="M994 198.6 H1010" stroke="#b5b1b5" stroke-width="1.200"/><path d="M1030 198.6 H1050" stroke="#b5b1b5" stroke-width="1.200"/><path d="M1075.800 198.6 H1085 M1088 198.6 H1097" stroke="#b5b1b5" stroke-width="1.200"/><path d="M910 202.7 H930" stroke="#b5b1b5" stroke-width="1.200"/><path d="M950 202.7 H970" stroke="#b5b1b5" stroke-width="1.200"/><path d="M990 202.7 H1010" stroke="#b5b1b5" stroke-width="1.200"/><path d="M1030 202.7 H1050" stroke="#b5b1b5" stroke-width="1.200"/><path d="M1075.800 202.7 H1085 M1088 202.7 H1097" stroke="#b5b1b5" stroke-width="1.200"/><path d="M910 206.8 H926" stroke="#b5b1b5" stroke-width="1.200"/><path d="M953.5 206.8 H966.5" stroke="#b5b1b5" stroke-width="1.200"/><path d="M994 206.8 H1010" stroke="#b5b1b5" stroke-width="1.200"/><path d="M1030 206.8 H1050" stroke="#b5b1b5" stroke-width="1.200"/><path d="M1075.800 206.8 H1085 M1088 206.8 H1097" stroke="#b5b1b5" stroke-width="1.200"/><path d="M910 210.9 H930" stroke="#b5b1b5" stroke-width="1.200"/><path d="M950 210.9 H970" stroke="#b5b1b5" stroke-width="1.200"/><path d="M990 210.9 H1010" stroke="#b5b1b5" stroke-width="1.200"/><path d="M1030 210.9 H1050" stroke="#b5b1b5" stroke-width="1.200"/><path d="M1075.800 210.9 H1085 M1088 210.9 H1097" stroke="#b5b1b5" stroke-width="1.200"/><path d="M910 215 H926" stroke="#b5b1b5" stroke-width="1.200"/><path d="M953.5 215 H966.5" stroke="#b5b1b5" stroke-width="1.200"/><path d="M994 215 H1010" stroke="#b5b1b5" stroke-width="1.200"/><path d="M1030 215 H1050" stroke="#b5b1b5" stroke-width="1.200"/><path d="M1075.800 215 H1085 M1088 215 H1097" stroke="#b5b1b5" stroke-width="1.200"/><g stroke="#b5b1b5" stroke-width="1.200" fill="none"><path d="M1168.500 136 V157 M1173.500 136 V157 M1179 148 V157 M1184.500 148 V157"/><path d="M1166 154.500 l2.500 3 l2.500 -3 M1171 154.500 l2.500 3 l2.500 -3 M1176.500 154.500 l2.500 3 l2.500 -3 M1182 154.500 l2.500 3 l2.500 -3"/></g><text x="1178" y="146.500" font-size="14.500" fill="#b5b1b5" font-family="Liberation Sans, sans-serif">A</text><path d="M1169.500 172.500 h-3 v19 h3 M1186.500 172.500 h3 v19 h-3" fill="none" stroke="#b5b1b5" stroke-width="1.300"/><rect x="1167.500" y="173.500" width="21" height="17" fill="#f3edf3"/><path d="M1171 179.5 H1185" stroke="#cfc8cf" stroke-width="1"/><path d="M1171 182.5 H1185" stroke="#cfc8cf" stroke-width="1"/><path d="M1171 185.5 H1185" stroke="#cfc8cf" stroke-width="1"/><path d="M1178 170.500 V177.500 M1178 193.500 V187" stroke="#b5b1b5" stroke-width="1.600"/><path d="M1174.500 174 l3.500 -3.800 l3.500 3.800 M1174.500 190 l3.500 3.800 l3.500 -3.800" fill="none" stroke="#b5b1b5" stroke-width="1.600"/><path d="M1166 209.500 h16 l3 5.500 h-14 l2.500 6.500 h-7.500 l4.500 -6z" fill="#b5b1b5"/><rect x="1175.500" y="215.500" width="14" height="10.800" rx="1" fill="#f3edf3" stroke="#b5b1b5" stroke-width="1"/><path d="M1178 219.5 H1187" stroke="#cfc8cf" stroke-width="1"/><path d="M1178 222.5 H1187" stroke="#cfc8cf" stroke-width="1"/></svg><svg style="position:absolute;left:948.7px;top:157.7px;" width="8.599999999999909" height="5.2999999999999545" viewBox="0 0 8.599999999999909 5.2999999999999545"><path d="M1 1 L4.30 4.30 L7.60 1" fill="none" stroke="#a8a8a8" stroke-width="1.1"/></svg><svg style="position:absolute;left:1010.7px;top:157.7px;" width="8.599999999999909" height="5.2999999999999545" viewBox="0 0 8.599999999999909 5.2999999999999545"><path d="M1 1 L4.30 4.30 L7.60 1" fill="none" stroke="#a8a8a8" stroke-width="1.1"/></svg><svg style="position:absolute;left:1144.8px;top:157.6px;" width="8.700000000000045" height="5.350000000000023" viewBox="0 0 8.700000000000045 5.350000000000023"><path d="M1 1 L4.35 4.35 L7.70 1" fill="none" stroke="#a8a8a8" stroke-width="1.1"/></svg><svg style="position:absolute;left:1105.7px;top:203.7px;" width="8.599999999999909" height="5.2999999999999545" viewBox="0 0 8.599999999999909 5.2999999999999545"><path d="M1 1 L4.30 4.30 L7.60 1" fill="none" stroke="#a8a8a8" stroke-width="1.1"/></svg><svg style="position:absolute;left:1196.5px;top:145.5px;" width="9.200000000000045" height="5.600000000000023" viewBox="0 0 9.200000000000045 5.600000000000023"><path d="M1 1 L4.60 4.60 L8.20 1" fill="none" stroke="#a8a8a8" stroke-width="1.1"/></svg><svg style="position:absolute;left:1196.5px;top:180.5px;" width="9.200000000000045" height="5.600000000000023" viewBox="0 0 9.200000000000045 5.600000000000023"><path d="M1 1 L4.60 4.60 L8.20 1" fill="none" stroke="#a8a8a8" stroke-width="1.1"/></svg><svg style="position:absolute;left:1196.5px;top:215.5px;" width="9.200000000000045" height="5.600000000000023" viewBox="0 0 9.200000000000045 5.600000000000023"><path d="M1 1 L4.60 4.60 L8.20 1" fill="none" stroke="#a8a8a8" stroke-width="1.1"/></svg><div style="position:absolute;left:1066.0px;top:190.0px;width:1.0px;height:32.0px;background:#e2e2e2"></div><span class="t" style="left:1023.8px;top:244.0px;font-size:15.5px;color:#3b3b3b;font-weight:400;font-family:'Liberation Sans', sans-serif;transform:scaleX(1.0115);">Абзац</span><svg style="position:absolute;left:1208.3px;top:246.0px;" width="12" height="11" viewBox="0 0 12 11"><path d="M0.6 8 V0.6 H8" fill="none" stroke="#c4c4c4" stroke-width="1.1"/><path d="M4 4 L10 10 M10 5.5 V10 H5.5" fill="none" stroke="#c4c4c4" stroke-width="1.1"/></svg><svg style="position:absolute;left:1240.0px;top:130.0px;" width="330" height="100" viewBox="1240 130 330 100"><circle cx="1284" cy="150" r="13.300" fill="#fff" stroke="#5a7bb0" stroke-width="1"/><rect x="1254.500" y="142.500" width="24" height="24" fill="#fff" stroke="#4a6a9f" stroke-width="1.100"/><path d="M1275.300 153.700 l13 13 l-13 13 l-13 -13z" fill="#fff" stroke="#5a7bb0" stroke-width="1"/><rect x="1375.300" y="145" width="12.700" height="12.800" fill="#eec278"/><rect x="1363" y="157.500" width="12.800" height="12.500" fill="#eec278"/><rect x="1355.500" y="137.500" width="18.300" height="18.300" fill="#fff" stroke="#7e7e7e" stroke-width="1.100"/><rect x="1377.500" y="159.500" width="18.300" height="18.300" fill="#fff" stroke="#7e7e7e" stroke-width="1.100"/><rect x="1464.500" y="138.800" width="38.500" height="38" rx="7" fill="#f1edf1" stroke="#d6d0d6" stroke-width="1.100"/><path d="M1508 150 v11 l-9 8 l-4.500 -4.500z" fill="#b5b1b5"/><path d="M1496.500 163 l5 5 l-3 3 l-5 -5z" fill="#cfc9cf"/><path d="M1491.800 167.700 l4.800 4.800 c-3 5 -8 8.500 -20.500 9.200 c5 -3 8.500 -7.500 15.700 -14z" fill="#b5b1b5"/><path d="M1549 139.500 l8 8 l-7.500 6.500 l-8.500 -8z" fill="#fff" stroke="#b5b1b5" stroke-width="1.200"/><path d="M1547.500 143 v-6.500 a2.300 2.300 0 0 1 4.600 0 v4" fill="none" stroke="#b5b1b5" stroke-width="1.200"/><path d="M1557.500 146.500 c1.800 2.500 1.800 4.500 0 6z" fill="#b5b1b5" stroke="#b5b1b5" stroke-width="1"/><path d="M1548 169.500 h-11.500 v15 h15 v-5" fill="none" stroke="#b5b1b5" stroke-width="1.200"/><path d="M1556 168.500 l2.700 2.700 l-12 12.300 l-4 1.200 l1.300 -4z" fill="#b5b1b5"/><path d="M1541 205 h15 l3.500 3 l-3 12 l-3 3 h-15 l-2.500 -3 z" fill="#d9d3d9"/><path d="M1541.500 205.500 h14 l-3 13.500 h-14.500z" fill="#f1edf1" stroke="#d0cad0" stroke-width="0.800"/></svg><span class="t" style="left:1244.6px;top:189.0px;font-size:16.5px;color:#2b2b2b;font-weight:400;font-family:'Liberation Sans', sans-serif;transform:scaleX(1.1108);">Фигуры</span><svg style="position:absolute;left:1271.8px;top:217.6px;" width="8.700000000000045" height="5.350000000000023" viewBox="0 0 8.700000000000045 5.350000000000023"><path d="M1 1 L4.35 4.35 L7.70 1" fill="none" stroke="#444" stroke-width="1.2"/></svg><span class="t" style="left:1321.6px;top:189.0px;font-size:16.5px;color:#2b2b2b;font-weight:400;font-family:'Liberation Sans', sans-serif;transform:scaleX(1.0991);">Упорядочить</span><svg style="position:absolute;left:1371.8px;top:217.6px;" width="8.700000000000045" height="5.350000000000023" viewBox="0 0 8.700000000000045 5.350000000000023"><path d="M1 1 L4.35 4.35 L7.70 1" fill="none" stroke="#444" stroke-width="1.2"/></svg><span class="t" style="left:1444.1px;top:189.0px;font-size:16.5px;color:#b5b1b5;font-weight:400;font-family:'Liberation Sans', sans-serif;transform:scaleX(1.0495);">Экспресс-</span><span class="t" style="left:1453.8px;top:213.0px;font-size:16.5px;color:#b5b1b5;font-weight:400;font-family:'Liberation Sans', sans-serif;transform:scaleX(1.0140);">стили</span><svg style="position:absolute;left:1504.8px;top:217.6px;" width="8.700000000000045" height="5.350000000000023" viewBox="0 0 8.700000000000045 5.350000000000023"><path d="M1 1 L4.35 4.35 L7.70 1" fill="none" stroke="#b0b0b0" stroke-width="1.1"/></svg><svg style="position:absolute;left:1576.5px;top:145.1px;" width="9.0" height="5.5" viewBox="0 0 9.0 5.5"><path d="M1 1 L4.50 4.50 L8.00 1" fill="none" stroke="#a8a8a8" stroke-width="1.1"/></svg><svg style="position:absolute;left:1576.5px;top:178.9px;" width="9.0" height="5.5" viewBox="0 0 9.0 5.5"><path d="M1 1 L4.50 4.50 L8.00 1" fill="none" stroke="#a8a8a8" stroke-width="1.1"/></svg><svg style="position:absolute;left:1567.0px;top:213.1px;" width="9" height="5.5" viewBox="0 0 9 5.5"><path d="M1 1 L4.50 4.50 L8.00 1" fill="none" stroke="#a8a8a8" stroke-width="1.1"/></svg><span class="t" style="left:1364.6px;top:244.0px;font-size:15.5px;color:#3b3b3b;font-weight:400;font-family:'Liberation Sans', sans-serif;transform:scaleX(0.9924);">Рисование</span><svg style="position:absolute;left:1588.3px;top:246.0px;" width="12" height="11" viewBox="0 0 12 11"><path d="M0.6 8 V0.6 H8" fill="none" stroke="#b4b4b4" stroke-width="1.1"/><path d="M4 4 L10 10 M10 5.5 V10 H5.5" fill="none" stroke="#b4b4b4" stroke-width="1.1"/></svg><span class="t" style="left:1632.1px;top:244.0px;font-size:15.5px;color:#3b3b3b;font-weight:400;font-family:'Liberation Sans', sans-serif;transform:scaleX(0.9975);">Редактирование</span></div>
<div id="thumbs"><div style="position:absolute;left:273.0px;top:264.0px;width:26.0px;height:750.0px;background:#f1f1f1"></div><div style="position:absolute;left:302.0px;top:264.0px;width:1.0px;height:750.0px;background:#d4d4d4"></div><div style="position:absolute;left:273.0px;top:265.0px;width:25.0px;height:25.0px;background:#fff;border:1px solid #d0d0d0;box-sizing:border-box"></div><svg style="position:absolute;left:280.0px;top:274.0px;" width="11.4" height="6" viewBox="0 0 11.4 6"><path d="M0 6 L5.700 0 L11.400 6z" fill="#7a7a7a"/></svg><div style="position:absolute;left:273.0px;top:293.0px;width:25.0px;height:220.5px;background:#fff;border:1px solid #c6c6c6;box-sizing:border-box"></div><div style="position:absolute;left:273.0px;top:997.0px;width:25.0px;height:17.0px;background:#fff;border:1px solid #d0d0d0;box-sizing:border-box"></div><svg style="position:absolute;left:280.0px;top:1003.0px;" width="11.4" height="6" viewBox="0 0 11.4 6"><path d="M0 0 L5.700 6 L11.400 0z" fill="#7a7a7a"/></svg><div style="position:absolute;left:48.8px;top:279.0px;width:197.4px;height:115.0px;background:#7a0b17"></div><svg style="position:absolute;left:53.2px;top:283.3px;overflow:hidden" width="188.5" height="106" viewBox="0 0 188.5 106"><rect x="0" y="0" width="188.5" height="106" fill="#fff"/><line x1="144.88" y1="0" x2="163.73" y2="106" stroke="#7fd0dd" stroke-width="0.75"/><line x1="188.44" y1="56.90" x2="114.80" y2="106" stroke="#7fd0dd" stroke-width="0.75"/><polygon points="173.57,0.00 188.50,0.00 188.50,106.00 141.96,106.00" fill="#1cade4" fill-opacity="0.24"/><polygon points="148.48,0.00 188.50,0.00 188.50,106.00 167.07,106.00" fill="#1cade4" fill-opacity="0.05"/><polygon points="188.50,47.11 188.50,106.00 138.10,106.00" fill="#1cade4" fill-opacity="0.64"/><polygon points="144.49,0.00 188.50,0.00 188.50,106.00 182.15,106.00" fill="#1cade4" fill-opacity="0.56"/><polygon points="184.26,0.00 188.50,0.00 188.50,106.00 168.50,106.00" fill="#0c60b4" fill-opacity="0.42"/><polygon points="169.20,0.00 188.50,0.00 188.50,106.00 186.46,106.00" fill="#2e6a9e" fill-opacity="0.9"/><polygon points="188.50,55.49 188.50,106.00 160.36,106.00" fill="#1cade4" fill-opacity="0.62"/><polygon points="0.00,0.00 13.55,0.00 0.00,87.13" fill="#77ceef" fill-opacity="0.85"/></svg><span class="t" style="left:98.6px;top:308.0px;font-size:7.2px;color:#555;font-weight:400;font-family:'Liberation Sans', sans-serif;transform:scaleX(0.9677);">Инклюзивное волонтерство в</span><span class="t" style="left:149.8px;top:317.0px;font-size:7.2px;color:#555;font-weight:400;font-family:'Liberation Sans', sans-serif;transform:scaleX(0.9696);">университете</span><span class="t" style="left:64.5px;top:326.0px;font-size:11.3px;color:#111;font-weight:400;-webkit-text-stroke:0.45px #111;font-family:'Liberation Sans', sans-serif;transform:scaleX(0.9767);">Проект «Доброе сердце»</span><span class="t" style="left:64.0px;top:366.0px;font-size:3.6px;color:#555;font-weight:400;font-family:'Liberation Sans', sans-serif;transform:scaleX(0.9600);">Работу выполнили: Запольская Виктория (НГПУ), Рыбакова Маргарита</span><span class="t" style="left:64.0px;top:370.0px;font-size:3.6px;color:#555;font-weight:400;font-family:'Liberation Sans', sans-serif;transform:scaleX(0.9547);">(НГПУ), Екатерина Федосова(НГТУ), Анастасия Плеханова (ННГАСУ)</span><svg style="position:absolute;left:53.2px;top:421.3px;overflow:hidden" width="188.5" height="106" viewBox="0 0 188.5 106"><rect x="0" y="0" width="188.5" height="106" fill="#fff"/><line x1="144.88" y1="0" x2="163.73" y2="106" stroke="#7fd0dd" stroke-width="0.75"/><line x1="188.44" y1="56.90" x2="114.80" y2="106" stroke="#7fd0dd" stroke-width="0.75"/><polygon points="173.57,0.00 188.50,0.00 188.50,106.00 141.96,106.00" fill="#1cade4" fill-opacity="0.24"/><polygon points="148.48,0.00 188.50,0.00 188.50,106.00 167.07,106.00" fill="#1cade4" fill-opacity="0.05"/><polygon points="188.50,47.11 188.50,106.00 138.10,106.00" fill="#1cade4" fill-opacity="0.64"/><polygon points="144.49,0.00 188.50,0.00 188.50,106.00 182.15,106.00" fill="#1cade4" fill-opacity="0.56"/><polygon points="184.26,0.00 188.50,0.00 188.50,106.00 168.50,106.00" fill="#0c60b4" fill-opacity="0.42"/><polygon points="169.20,0.00 188.50,0.00 188.50,106.00 186.46,106.00" fill="#2e6a9e" fill-opacity="0.9"/><polygon points="188.50,55.49 188.50,106.00 160.36,106.00" fill="#1cade4" fill-opacity="0.62"/><polygon points="0.00,63.60 7.54,106.00 0.00,106.00" fill="#77ceef" fill-opacity="0.85"/><rect x="123.500" y="26.5" width="8.500" height="8" fill="#fff" stroke="#9ccf8e" stroke-width="0.700"/><path d="M124.500 30.0 l3 3.500 l6 -9" fill="none" stroke="#2fae1e" stroke-width="1.400"/><rect x="123.500" y="40.2" width="8.500" height="8" fill="#fff" stroke="#9ccf8e" stroke-width="0.700"/><path d="M124.500 43.7 l3 3.500 l6 -9" fill="none" stroke="#2fae1e" stroke-width="1.400"/><rect x="123.500" y="53.9" width="8.500" height="8" fill="#fff" stroke="#9ccf8e" stroke-width="0.700"/><path d="M124.500 57.4 l3 3.500 l6 -9" fill="none" stroke="#2fae1e" stroke-width="1.400"/><rect x="123.500" y="67.6" width="8.500" height="8" fill="#fff" stroke="#9ccf8e" stroke-width="0.700"/><path d="M124.500 71.1 l3 3.500 l6 -9" fill="none" stroke="#2fae1e" stroke-width="1.400"/><rect x="123.500" y="81.3" width="8.500" height="8" fill="#fff" stroke="#9ccf8e" stroke-width="0.700"/><path d="M124.500 84.8 l3 3.500 l6 -9" fill="none" stroke="#2fae1e" stroke-width="1.400"/><g transform="translate(-4.500,-6.500)"><ellipse cx="165" cy="38" rx="8.500" ry="9" fill="#e9e9ea"/><path d="M160 46 c-3 8 -3 20 -1 30 l-1 12 h5 l2 -12 l3 12 h5.500 l-3 -14 c1.500 -9 1 -18 -2 -28z" fill="#e4e4e6"/><path d="M160 50 l-14 -11 l2 -3 l15 8z" fill="#dedee0"/><path d="M170 52 l8 14 l-2.500 2 l-8 -11z" fill="#dedee0"/><ellipse cx="166" cy="89.500" rx="13" ry="2" fill="#d8dde0" opacity="0.700"/></g><path d="M133.500 23 l3.500 -1.200 l7 13 l-4.500 2.500z" fill="#3fae2a"/><rect x="0.5" y="0.500" width="187.5" height="105" fill="none" stroke="#c9c9c9" stroke-width="1"/></svg><span class="t" style="left:66.0px;top:433.0px;font-size:11.3px;color:#111;font-weight:400;-webkit-text-stroke:0.3px #111;font-family:'Liberation Sans', sans-serif;transform:scaleX(0.9752);">Цели и задачи проекта</span><span class="t" style="left:66.0px;top:458.0px;font-size:3.3px;color:#505050;font-weight:400;font-family:'Liberation Sans', sans-serif;transform:scaleX(1.1356);">Цель:  Создать сферу для социально и нравственно-нного</span><span class="t" style="left:66.0px;top:464.0px;font-size:3.3px;color:#444;font-weight:700;font-family:'Liberation Sans', sans-serif;transform:scaleX(1.0923);">Задачи:</span><span class="t" style="left:71.1px;top:471.0px;font-size:3.3px;color:#505050;font-weight:400;font-family:'Liberation Sans', sans-serif;transform:scaleX(1.0671);">найти волонтеров для дальнейшей деятельности</span><span class="t" style="left:71.1px;top:477.0px;font-size:3.3px;color:#505050;font-weight:400;font-family:'Liberation Sans', sans-serif;transform:scaleX(1.1606);">расширение, действующего волонтерства;</span><span class="t" style="left:71.1px;top:482.0px;font-size:3.3px;color:#505050;font-weight:400;font-family:'Liberation Sans', sans-serif;transform:scaleX(0.9305);">обучение новых членов коммуникации навыкам с людьми с инвалидностью и ОВЗ.</span><svg style="position:absolute;left:66.3px;top:470.0px;" width="3" height="3" viewBox="0 0 3 3"><path d="M0 0 L2.600 1.500 L0 3z" fill="#3fa9dc"/></svg><svg style="position:absolute;left:66.3px;top:476.0px;" width="3" height="3" viewBox="0 0 3 3"><path d="M0 0 L2.600 1.500 L0 3z" fill="#3fa9dc"/></svg><svg style="position:absolute;left:66.3px;top:481.8px;" width="3" height="3" viewBox="0 0 3 3"><path d="M0 0 L2.600 1.500 L0 3z" fill="#3fa9dc"/></svg><svg style="position:absolute;left:53.2px;top:559.3px;overflow:hidden" width="188.5" height="106" viewBox="0 0 188.5 106"><rect x="0" y="0" width="188.5" height="106" fill="#fff"/><line x1="144.88" y1="0" x2="163.73" y2="106" stroke="#7fd0dd" stroke-width="0.75"/><line x1="188.44" y1="56.90" x2="114.80" y2="106" stroke="#7fd0dd" stroke-width="0.75"/><polygon points="173.57,0.00 188.50,0.00 188.50,106.00 141.96,106.00" fill="#1cade4" fill-opacity="0.24"/><polygon points="148.48,0.00 188.50,0.00 188.50,106.00 167.07,106.00" fill="#1cade4" fill-opacity="0.05"/><polygon points="188.50,47.11 188.50,106.00 138.10,106.00" fill="#1cade4" fill-opacity="0.64"/><polygon points="144.49,0.00 188.50,0.00 188.50,106.00 182.15,106.00" fill="#1cade4" fill-opacity="0.56"/><polygon points="184.26,0.00 188.50,0.00 188.50,106.00 168.50,106.00" fill="#0c60b4" fill-opacity="0.42"/><polygon points="169.20,0.00 188.50,0.00 188.50,106.00 186.46,106.00" fill="#2e6a9e" fill-opacity="0.9"/><polygon points="188.50,55.49 188.50,106.00 160.36,106.00" fill="#1cade4" fill-opacity="0.62"/><polygon points="0.00,63.60 7.54,106.00 0.00,106.00" fill="#77ceef" fill-opacity="0.85"/><ellipse cx="100" cy="58.500" rx="8.500" ry="8.500" fill="#e8e8ea"/><path d="M94 66 c-2 6 -2 12 0 17 l-3 16 h5.500 l3.500 -14 l2.500 14 h5.500 l-2 -17 c2 -6 1.500 -11 -1 -16z" fill="#e2e2e4"/><path d="M93 72 c5 3 10 2 16 -2 l1 3 c-6 5 -12 5 -18 2z" fill="#d6d6d9"/><path d="M106 71 c5 6 8 14 10 22 c8 -22 20 -38 34 -50 c-12 16 -21 34 -28 56 c-2 2 -5 2 -7 0 c-3 -10 -6 -18 -11 -25z" fill="#22b31a"/><rect x="0.5" y="0.500" width="187.5" height="105" fill="none" stroke="#c9c9c9" stroke-width="1"/></svg><span class="t" style="left:65.7px;top:572.0px;font-size:6.3px;color:#444;font-weight:400;font-family:'Liberation Sans', sans-serif;transform:scaleX(0.9833);">Актуальность:</span><span class="t" style="left:71.1px;top:589.0px;font-size:3.2px;color:#505050;font-weight:400;font-family:'Liberation Sans', sans-serif;transform:scaleX(1.0089);">В настоящее время получить необходимую карьеру не профессионал- волонтеры.</span><span class="t" style="left:71.1px;top:593.0px;font-size:3.2px;color:#505050;font-weight:400;font-family:'Liberation Sans', sans-serif;transform:scaleX(1.0194);">Наш проект является актуальным, так как он направлен на привлечение</span><span class="t" style="left:71.1px;top:597.0px;font-size:3.2px;color:#505050;font-weight:400;font-family:'Liberation Sans', sans-serif;transform:scaleX(1.0410);">волонтёров, которые бы помогали другим людям. Мы считаем, что</span><span class="t" style="left:71.1px;top:602.0px;font-size:3.2px;color:#505050;font-weight:400;font-family:'Liberation Sans', sans-serif;transform:scaleX(1.0813);">добровольцем может быть каждый человек вне зависимости от отношения</span><span class="t" style="left:71.1px;top:606.0px;font-size:3.2px;color:#505050;font-weight:400;font-family:'Liberation Sans', sans-serif;transform:scaleX(1.0717);">трудовых: поэтому этот проект ориентирован на как можно больше людей с</span><span class="t" style="left:71.1px;top:610.0px;font-size:3.2px;color:#505050;font-weight:400;font-family:'Liberation Sans', sans-serif;transform:scaleX(1.0333);">взаимодействия ОВЗ.</span><svg style="position:absolute;left:66.3px;top:587.6px;" width="3" height="3" viewBox="0 0 3 3"><path d="M0 0 L2.600 1.500 L0 3z" fill="#3fa9dc"/></svg><svg style="position:absolute;left:53.2px;top:697.3px;overflow:hidden" width="188.5" height="106" viewBox="0 0 188.5 106"><rect x="0" y="0" width="188.5" height="106" fill="#fff"/><line x1="144.88" y1="0" x2="163.73" y2="106" stroke="#7fd0dd" stroke-width="0.75"/><line x1="188.44" y1="56.90" x2="114.80" y2="106" stroke="#7fd0dd" stroke-width="0.75"/><polygon points="173.57,0.00 188.50,0.00 188.50,106.00 141.96,106.00" fill="#1cade4" fill-opacity="0.24"/><polygon points="148.48,0.00 188.50,0.00 188.50,106.00 167.07,106.00" fill="#1cade4" fill-opacity="0.05"/><polygon points="188.50,47.11 188.50,106.00 138.10,106.00" fill="#1cade4" fill-opacity="0.64"/><polygon points="144.49,0.00 188.50,0.00 188.50,106.00 182.15,106.00" fill="#1cade4" fill-opacity="0.56"/><polygon points="184.26,0.00 188.50,0.00 188.50,106.00 168.50,106.00" fill="#0c60b4" fill-opacity="0.42"/><polygon points="169.20,0.00 188.50,0.00 188.50,106.00 186.46,106.00" fill="#2e6a9e" fill-opacity="0.9"/><polygon points="188.50,55.49 188.50,106.00 160.36,106.00" fill="#1cade4" fill-opacity="0.62"/><polygon points="0.00,63.60 7.54,106.00 0.00,106.00" fill="#77ceef" fill-opacity="0.85"/><circle cx="145.600" cy="58.500" r="23.500" fill="#c9c9cc"/><ellipse cx="121" cy="36" rx="13" ry="11" fill="#55565a" transform="rotate(-40 121 36)"/><circle cx="121.500" cy="34.500" r="6.300" fill="#8a4b22"/><ellipse cx="170.500" cy="36.500" rx="14" ry="11.500" fill="#b9bbc0" transform="rotate(40 170.500 36.500)"/><circle cx="170.300" cy="35.200" r="6.500" fill="#222326"/><ellipse cx="122" cy="82" rx="12" ry="10" fill="#e8e8ea" transform="rotate(40 122 82)"/><circle cx="121.600" cy="83.700" r="6.300" fill="#1f2023"/><ellipse cx="170" cy="82" rx="13" ry="11" fill="#aeb0b6" transform="rotate(-40 170 82)"/><circle cx="170.300" cy="84" r="6.500" fill="#1f2023"/><rect x="127.500" y="43" width="11" height="8" fill="#f4f4f5" stroke="#4a4a4e" stroke-width="0.800" transform="rotate(-38 133 47)"/><rect x="144" y="43.500" width="13" height="10" fill="#f6f6f6" stroke="#7a7a7e" stroke-width="0.600" transform="rotate(38 150.500 48.500)"/><rect x="151" y="66" width="11" height="8" fill="#f4f4f5" stroke="#4a4a4e" stroke-width="0.800" transform="rotate(-38 156.500 70)"/><rect x="143" y="57" width="8" height="7" fill="#e9f0e4" transform="rotate(30 147 60.500)"/><rect x="129" y="64" width="8" height="7" fill="#8fc0d8" transform="rotate(30 133 67.500)"/><circle cx="133" cy="58" r="2.200" fill="#b86a3a"/><circle cx="145" cy="68" r="2" fill="#b86a3a"/><circle cx="164.500" cy="55.500" r="2.200" fill="#b86a3a"/><circle cx="146" cy="37.500" r="1.800" fill="#b86a3a"/><rect x="146" y="74" width="4" height="5" rx="1" fill="#e8b23a"/><rect x="0.5" y="0.500" width="187.5" height="105" fill="none" stroke="#c9c9c9" stroke-width="1"/></svg><span class="t" style="left:65.7px;top:710.0px;font-size:6.5px;color:#222;font-weight:400;-webkit-text-stroke:0.2px #222;font-family:'Liberation Sans', sans-serif;transform:scaleX(1.1316);">План мероприятий</span><span class="t" style="left:71.1px;top:733.0px;font-size:3.2px;color:#505050;font-weight:400;font-family:'Liberation Sans', sans-serif;transform:scaleX(1.1284);">Привлечение студентов на платформе ВУЗа</span><span class="t" style="left:71.1px;top:740.0px;font-size:3.2px;color:#505050;font-weight:400;font-family:'Liberation Sans', sans-serif;transform:scaleX(1.1347);">Привлечение школьников по группам через группу</span><span class="t" style="left:71.1px;top:744.0px;font-size:3.2px;color:#505050;font-weight:400;font-family:'Liberation Sans', sans-serif;transform:scaleX(1.0674);">«Молодёжь Нижний Новгород»</span><span class="t" style="left:71.1px;top:750.0px;font-size:3.2px;color:#505050;font-weight:400;font-family:'Liberation Sans', sans-serif;transform:scaleX(1.0815);">Раздача буклетов в молодежных и реабилитационных</span><span class="t" style="left:71.1px;top:754.0px;font-size:3.2px;color:#505050;font-weight:400;font-family:'Liberation Sans', sans-serif;transform:scaleX(1.0917);">центрах</span><svg style="position:absolute;left:66.3px;top:732.2px;" width="3" height="3" viewBox="0 0 3 3"><path d="M0 0 L2.600 1.500 L0 3z" fill="#3fa9dc"/></svg><svg style="position:absolute;left:66.3px;top:739.1px;" width="3" height="3" viewBox="0 0 3 3"><path d="M0 0 L2.600 1.500 L0 3z" fill="#3fa9dc"/></svg><svg style="position:absolute;left:66.3px;top:749.3px;" width="3" height="3" viewBox="0 0 3 3"><path d="M0 0 L2.600 1.500 L0 3z" fill="#3fa9dc"/></svg><svg style="position:absolute;left:53.2px;top:835.3px;overflow:hidden" width="188.5" height="106" viewBox="0 0 188.5 106"><rect x="0" y="0" width="188.5" height="106" fill="#fff"/><line x1="144.88" y1="0" x2="163.73" y2="106" stroke="#7fd0dd" stroke-width="0.75"/><line x1="188.44" y1="56.90" x2="114.80" y2="106" stroke="#7fd0dd" stroke-width="0.75"/><polygon points="173.57,0.00 188.50,0.00 188.50,106.00 141.96,106.00" fill="#1cade4" fill-opacity="0.24"/><polygon points="148.48,0.00 188.50,0.00 188.50,106.00 167.07,106.00" fill="#1cade4" fill-opacity="0.05"/><polygon points="188.50,47.11 188.50,106.00 138.10,106.00" fill="#1cade4" fill-opacity="0.64"/><polygon points="144.49,0.00 188.50,0.00 188.50,106.00 182.15,106.00" fill="#1cade4" fill-opacity="0.56"/><polygon points="184.26,0.00 188.50,0.00 188.50,106.00 168.50,106.00" fill="#0c60b4" fill-opacity="0.42"/><polygon points="169.20,0.00 188.50,0.00 188.50,106.00 186.46,106.00" fill="#2e6a9e" fill-opacity="0.9"/><polygon points="188.50,55.49 188.50,106.00 160.36,106.00" fill="#1cade4" fill-opacity="0.62"/><polygon points="0.00,63.60 7.54,106.00 0.00,106.00" fill="#77ceef" fill-opacity="0.85"/><rect x="0.5" y="0.500" width="187.5" height="105" fill="none" stroke="#c9c9c9" stroke-width="1"/></svg><span class="t" style="left:65.7px;top:848.0px;font-size:6.5px;color:#222;font-weight:400;-webkit-text-stroke:0.2px #222;font-family:'Liberation Sans', sans-serif;transform:scaleX(1.1316);">План мероприятий</span><span class="t" style="left:71.1px;top:871.0px;font-size:3.2px;color:#505050;font-weight:400;font-family:'Liberation Sans', sans-serif;transform:scaleX(1.0775);">Организационное собрание для всех волонтеров, на котором выявляются</span><span class="t" style="left:71.1px;top:876.0px;font-size:3.2px;color:#505050;font-weight:400;font-family:'Liberation Sans', sans-serif;transform:scaleX(1.0868);">заинтересованные лица для дальнейшего распределения по направлениям</span><span class="t" style="left:71.1px;top:880.0px;font-size:3.2px;color:#505050;font-weight:400;font-family:'Liberation Sans', sans-serif;transform:scaleX(1.0874);">работы (куратор, медик, фандрайзинг, распространитель)</span><span class="t" style="left:71.1px;top:886.0px;font-size:3.2px;color:#505050;font-weight:400;font-family:'Liberation Sans', sans-serif;transform:scaleX(1.0606);">Создание чатов и мессенджеров для обмена опытом и по направлениям</span><span class="t" style="left:71.1px;top:890.0px;font-size:3.2px;color:#505050;font-weight:400;font-family:'Liberation Sans', sans-serif;transform:scaleX(1.0545);">работы</span><span class="t" style="left:71.1px;top:896.0px;font-size:3.2px;color:#505050;font-weight:400;font-family:'Liberation Sans', sans-serif;transform:scaleX(1.0916);">Собрание по направлениям для дальнейшего обучения</span><svg style="position:absolute;left:66.3px;top:870.2px;" width="3" height="3" viewBox="0 0 3 3"><path d="M0 0 L2.600 1.500 L0 3z" fill="#3fa9dc"/></svg><svg style="position:absolute;left:66.3px;top:885.0px;" width="3" height="3" viewBox="0 0 3 3"><path d="M0 0 L2.600 1.500 L0 3z" fill="#3fa9dc"/></svg><svg style="position:absolute;left:66.3px;top:894.9px;" width="3" height="3" viewBox="0 0 3 3"><path d="M0 0 L2.600 1.500 L0 3z" fill="#3fa9dc"/></svg><svg style="position:absolute;left:53.2px;top:973.3px;overflow:hidden" width="188.5" height="106" viewBox="0 0 188.5 106"><rect x="0" y="0" width="188.5" height="106" fill="#fff"/><line x1="144.88" y1="0" x2="163.73" y2="106" stroke="#7fd0dd" stroke-width="0.75"/><line x1="188.44" y1="56.90" x2="114.80" y2="106" stroke="#7fd0dd" stroke-width="0.75"/><polygon points="173.57,0.00 188.50,0.00 188.50,106.00 141.96,106.00" fill="#1cade4" fill-opacity="0.24"/><polygon points="148.48,0.00 188.50,0.00 188.50,106.00 167.07,106.00" fill="#1cade4" fill-opacity="0.05"/><polygon points="188.50,47.11 188.50,106.00 138.10,106.00" fill="#1cade4" fill-opacity="0.64"/><polygon points="144.49,0.00 188.50,0.00 188.50,106.00 182.15,106.00" fill="#1cade4" fill-opacity="0.56"/><polygon points="184.26,0.00 188.50,0.00 188.50,106.00 168.50,106.00" fill="#0c60b4" fill-opacity="0.42"/><polygon points="169.20,0.00 188.50,0.00 188.50,106.00 186.46,106.00" fill="#2e6a9e" fill-opacity="0.9"/><polygon points="188.50,55.49 188.50,106.00 160.36,106.00" fill="#1cade4" fill-opacity="0.62"/><polygon points="0.00,63.60 7.54,106.00 0.00,106.00" fill="#77ceef" fill-opacity="0.85"/><rect x="26.800" y="20.700" width="42.700" height="90" fill="#6a7fb0"/><rect x="69.500" y="20.700" width="72" height="90" fill="#eef8fc"/><g fill="#9acb3c"><ellipse cx="52" cy="22" rx="3" ry="7.500" transform="rotate(-50 52 22)"/><ellipse cx="58" cy="24" rx="3" ry="7" transform="rotate(-10 58 24)"/><ellipse cx="64" cy="22" rx="3" ry="7.500" transform="rotate(40 64 22)"/></g><rect x="26" y="8" width="118" height="12.700" fill="#fff"/><rect x="0.5" y="0.500" width="187.5" height="105" fill="none" stroke="#c9c9c9" stroke-width="1"/></svg><span class="t" style="left:65.8px;top:983.0px;font-size:6.5px;color:#222;font-weight:400;-webkit-text-stroke:0.25px #222;font-family:'Liberation Sans', sans-serif;transform:scaleX(1.1434);">Шаблон буклетов</span><span class="t" style="left:133.8px;top:998.0px;font-size:7.8px;color:#222;font-weight:700;font-family:'Liberation Sans', sans-serif;transform:scaleX(0.8576);">Доброе сердце</span><span class="t" style="left:130.3px;top:1012.0px;font-size:3.4px;color:#888;font-weight:400;font-family:'Liberation Sans', sans-serif;transform:scaleX(1.1362);">Программа для инклюзивного</span><span class="t" style="left:19.7px;top:279.0px;font-size:22.5px;color:#d24726;font-weight:400;font-family:'Liberation Sans', sans-serif;transform:translateX(-2.60px);">1</span><span class="t" style="left:18.7px;top:417.0px;font-size:22.5px;color:#444;font-weight:400;font-family:'Liberation Sans', sans-serif;transform:translateX(-1.35px);">2</span><span class="t" style="left:18.7px;top:555.0px;font-size:22.5px;color:#444;font-weight:400;font-family:'Liberation Sans', sans-serif;transform:translateX(-1.35px);">3</span><span class="t" style="left:18.2px;top:693.0px;font-size:22.5px;color:#444;font-weight:400;font-family:'Liberation Sans', sans-serif;transform:translateX(-0.85px);">4</span><span class="t" style="left:18.7px;top:831.0px;font-size:22.5px;color:#444;font-weight:400;font-family:'Liberation Sans', sans-serif;transform:translateX(-1.35px);">5</span><span class="t" style="left:18.7px;top:969.0px;font-size:22.5px;color:#444;font-weight:400;font-family:'Liberation Sans', sans-serif;transform:translateX(-1.25px);">6</span></div>
<div id="editor"><svg style="position:absolute;left:499.0px;top:275.0px;" width="1202" height="677" viewBox="0 0 1202 677"><rect x="0.5" y="0.5" width="1201" height="676" fill="#fff" stroke="#bdbdbf" stroke-width="1"/><g transform="translate(0.5,0.5)"><line x1="923.09" y1="0" x2="1043.19" y2="676" stroke="#b7d0d2" stroke-width="1.2"/><line x1="1200.64" y1="362.88" x2="731.41" y2="676" stroke="#b7d0d2" stroke-width="1.2"/><polygon points="1105.88,0.00 1201.00,0.00 1201.00,676.00 904.47,676.00" fill="#1cade4" fill-opacity="0.24"/><polygon points="946.03,0.00 1201.00,0.00 1201.00,676.00 1064.45,676.00" fill="#1cade4" fill-opacity="0.05"/><polygon points="1201.00,300.41 1201.00,676.00 879.85,676.00" fill="#1cade4" fill-opacity="0.64"/><polygon points="920.57,0.00 1201.00,0.00 1201.00,676.00 1160.53,676.00" fill="#1cade4" fill-opacity="0.56"/><polygon points="1173.98,0.00 1201.00,0.00 1201.00,676.00 1073.57,676.00" fill="#0c60b4" fill-opacity="0.42"/><polygon points="1078.02,0.00 1201.00,0.00 1201.00,676.00 1188.03,676.00" fill="#2e6a9e" fill-opacity="0.9"/><polygon points="1201.00,353.89 1201.00,676.00 1021.69,676.00" fill="#1cade4" fill-opacity="0.62"/><polygon points="0.00,0.00 86.35,0.00 0.00,555.67" fill="#77ceef" fill-opacity="0.85"/></g></svg><span class="t" style="left:785.4px;top:431.0px;font-size:46.5px;color:#0a0a0a;font-weight:400;font-family:'Liberation Sans', sans-serif;transform:scaleX(0.9626);-webkit-text-stroke:0.3px #0a0a0a;">Инклюзивное</span><span class="t" style="left:1077.9px;top:431.0px;font-size:46.5px;color:#0a0a0a;font-weight:400;font-family:'Liberation Sans', sans-serif;transform:scaleX(0.9634);-webkit-text-stroke:0.3px #0a0a0a;">волонтерство</span><span class="t" style="left:1372.9px;top:431.0px;font-size:46.5px;color:#0a0a0a;font-weight:400;font-family:'Liberation Sans', sans-serif;transform:translateX(1.06px);-webkit-text-stroke:0.3px #0a0a0a;">в</span><span class="t" style="left:1112.9px;top:485.0px;font-size:46.5px;color:#0a0a0a;font-weight:400;font-family:'Liberation Sans', sans-serif;transform:scaleX(0.9733);-webkit-text-stroke:0.3px #0a0a0a;">университете</span><span class="t" style="left:568.5px;top:540.0px;font-size:72px;color:#000;font-weight:700;font-family:'Liberation Sans', sans-serif;transform:scaleX(0.9299);">Проект «Доброе сердце»</span><span class="t" style="left:565.2px;top:802.0px;font-size:23px;color:#0a0a0a;font-weight:400;font-family:'Liberation Sans', sans-serif;transform:scaleX(0.9590);-webkit-text-stroke:0.3px #0a0a0a;">Работу выполнили: Запольская Виктория (НГПУ), Рыбакова Маргарита</span><span class="t" style="left:566.2px;top:829.0px;font-size:23px;color:#0a0a0a;font-weight:400;font-family:'Liberation Sans', sans-serif;transform:scaleX(0.9493);-webkit-text-stroke:0.3px #0a0a0a;">(НГПУ), Екатерина Федосова(НГТУ), Анастасия Плеханова (ННГАСУ)</span><svg style="position:absolute;left:1079.0px;top:472.0px;" width="284" height="4" viewBox="0 0 284 4"><path d="M0 2.2 L1 0.6  L3 2.2  L5 0.6  L7 2.2  L9 0.6  L11 2.2  L13 0.6  L15 2.2  L17 0.6  L19 2.2  L21 0.6  L23 2.2  L25 0.6  L27 2.2  L29 0.6  L31 2.2  L33 0.6  L35 2.2  L37 0.6  L39 2.2  L41 0.6  L43 2.2  L45 0.6  L47 2.2  L49 0.6  L51 2.2  L53 0.6  L55 2.2  L57 0.6  L59 2.2  L61 0.6  L63 2.2  L65 0.6  L67 2.2  L69 0.6  L71 2.2  L73 0.6  L75 2.2  L77 0.6  L79 2.2  L81 0.6  L83 2.2  L85 0.6  L87 2.2  L89 0.6  L91 2.2  L93 0.6  L95 2.2  L97 0.6  L99 2.2  L101 0.6  L103 2.2  L105 0.6  L107 2.2  L109 0.6  L111 2.2  L113 0.6  L115 2.2  L117 0.6  L119 2.2  L121 0.6  L123 2.2  L125 0.6  L127 2.2  L129 0.6  L131 2.2  L133 0.6  L135 2.2  L137 0.6  L139 2.2  L141 0.6  L143 2.2  L145 0.6  L147 2.2  L149 0.6  L151 2.2  L153 0.6  L155 2.2  L157 0.6  L159 2.2  L161 0.6  L163 2.2  L165 0.6  L167 2.2  L169 0.6  L171 2.2  L173 0.6  L175 2.2  L177 0.6  L179 2.2  L181 0.6  L183 2.2  L185 0.6  L187 2.2  L189 0.6  L191 2.2  L193 0.6  L195 2.2  L197 0.6  L199 2.2  L201 0.6  L203 2.2  L205 0.6  L207 2.2  L209 0.6  L211 2.2  L213 0.6  L215 2.2  L217 0.6  L219 2.2  L221 0.6  L223 2.2  L225 0.6  L227 2.2  L229 0.6  L231 2.2  L233 0.6  L235 2.2  L237 0.6  L239 2.2  L241 0.6  L243 2.2  L245 0.6  L247 2.2  L249 0.6  L251 2.2  L253 0.6  L255 2.2  L257 0.6  L259 2.2  L261 0.6  L263 2.2  L265 0.6  L267 2.2  L269 0.6  L271 2.2  L273 0.6  L275 2.2  L277 0.6  L279 2.2  L281 0.6  L283 2.2 " fill="none" stroke="#e8414d" stroke-width="0.9"/></svg><div style="position:absolute;left:305.0px;top:968.0px;width:1615.0px;height:1.0px;background:#d2d2d2"></div><span class="t" style="left:318.9px;top:980.0px;font-size:23px;color:#5c5c5c;font-weight:400;font-family:'Liberation Sans', sans-serif;transform:scaleX(0.9469);">Щелкните, чтобы добавить заметки</span><div style="position:absolute;left:1894.0px;top:264.0px;width:26.0px;height:750.0px;background:#f1f1f1"></div><div style="position:absolute;left:1894.0px;top:265.0px;width:25.0px;height:25.0px;background:#fff;border:1px solid #d0d0d0;box-sizing:border-box"></div><svg style="position:absolute;left:1900.9px;top:274.0px;" width="11.2" height="6" viewBox="0 0 11.2 6"><path d="M0 6 L5.6 0 L11.2 6z" fill="#707070"/></svg><div style="position:absolute;left:1894.0px;top:290.5px;width:25.0px;height:33.5px;background:#fff;border:1px solid #a9a9a9;box-sizing:border-box"></div><div style="position:absolute;left:1894.0px;top:861.5px;width:25.0px;height:24.5px;background:#fff;border:1px solid #d0d0d0;box-sizing:border-box"></div><svg style="position:absolute;left:1900.9px;top:871.0px;" width="11.2" height="6" viewBox="0 0 11.2 6"><path d="M0 0 L5.6 6 L11.2 0z" fill="#707070"/></svg><div style="position:absolute;left:1894.0px;top:886.0px;width:26.0px;height:82.0px;background:#fff"></div><svg style="position:absolute;left:1900.0px;top:892.5px;" width="13" height="13" viewBox="0 0 13 13"><path d="M0.3 6 L6.500 0.300 L12.700 6z M0.300 12.600 L6.500 6.900 L12.700 12.600z" fill="#707070"/></svg><svg style="position:absolute;left:1900.0px;top:919.0px;" width="13" height="13" viewBox="0 0 13 13"><path d="M0.3 0.400 L6.500 6.100 L12.700 0.400z M0.300 7 L6.500 12.700 L12.700 7z" fill="#707070"/></svg><div style="position:absolute;left:1894.0px;top:969.0px;width:26.0px;height:45.0px;background:#f1f1f1"></div><div style="position:absolute;left:1894.0px;top:972.0px;width:25.0px;height:21.5px;background:#fff;border:1px solid #d0d0d0;box-sizing:border-box"></div><svg style="position:absolute;left:1900.9px;top:980.0px;" width="11.2" height="6" viewBox="0 0 11.2 6"><path d="M0 6 L5.6 0 L11.2 6z" fill="#707070"/></svg><div style="position:absolute;left:1894.0px;top:993.5px;width:25.0px;height:21.0px;background:#fff;border:1px solid #d0d0d0;box-sizing:border-box"></div><svg style="position:absolute;left:1900.9px;top:1001.5px;" width="11.2" height="6" viewBox="0 0 11.2 6"><path d="M0 0 L5.6 6 L11.2 0z" fill="#707070"/></svg></div>
<div id="zoom"><div style="position:absolute;left:0.0px;top:0.0px;width:1920.0px;height:30.0px;background:#1a1a1a"></div><div style="position:absolute;left:10.0px;top:10.0px;width:30.0px;height:30.0px;background:#3b3b3b;border-radius:6px"></div><svg style="position:absolute;left:15.0px;top:15.0px;" width="20" height="20" viewBox="0 0 20 20"><path d="M10 1.3 C12.5 3 15 3.6 18 3.8 V9.5 C18 14 14.5 17.2 10 18.9 C5.5 17.2 2 14 2 9.5 V3.8 C5 3.6 7.5 3 10 1.3Z" fill="#23d959"/><path d="M6.3 10 l2.7 2.7 l5 -5.2" fill="none" stroke="#1f2b22" stroke-width="1.9"/></svg><div style="position:absolute;left:605.0px;top:0.0px;width:508.0px;height:26.5px;background:#23d959;border-radius:0 0 0 4px"></div><span class="t" style="left:626.7px;top:6.0px;font-size:15px;color:#25382d;font-weight:700;font-family:'Liberation Sans', sans-serif;transform:scaleX(0.9865);">Вы просматриваете экран Екатерина Федосова Нижний Новг...</span><div style="position:absolute;left:1113.0px;top:0.0px;width:218.0px;height:26.5px;background:#242424;border-radius:0 0 5px 0"></div><span class="t" style="left:1147.7px;top:6.0px;font-size:15px;color:#fff;font-weight:700;font-family:'Liberation Sans', sans-serif;transform:scaleX(0.9582);">Настройки просмотра</span><svg style="position:absolute;left:1310.5px;top:11.6px;" width="9.5" height="5.75" viewBox="0 0 9.5 5.75"><path d="M1 1 L4.75 4.75 L8.50 1" fill="none" stroke="#fff" stroke-width="1.6"/></svg><div style="position:absolute;left:1849.0px;top:8.0px;width:61.0px;height:32.5px;background:rgba(70,70,70,0.27);border-radius:7px"></div><svg style="position:absolute;left:1857.0px;top:15.0px;" width="15" height="15" viewBox="0 0 15 15"><rect x="0.8" y="4.4" width="13" height="9.4" rx="1" fill="#e4e4e4"/><rect x="0.8" y="0.8" width="3.6" height="2.8" rx="0.6" fill="#e4e4e4"/><rect x="5.5" y="0.8" width="3.6" height="2.8" rx="0.6" fill="#e4e4e4"/><rect x="10.2" y="0.8" width="3.6" height="2.8" rx="0.6" fill="#e4e4e4"/></svg><span class="t" style="left:1875.9px;top:16.0px;font-size:14.5px;color:#ededed;font-weight:400;font-family:'Liberation Sans', sans-serif;transform:scaleX(1.0229);">Вид</span><div style="position:absolute;left:0.0px;top:1014.0px;width:1920.0px;height:66.0px;background:#1a1a1a"></div><svg style="position:absolute;left:48.0px;top:1020.0px;" width="34" height="32" viewBox="0 0 34 32"><rect x="12.8" y="3" width="8.6" height="17" rx="4.3" fill="#a9a9a9"/><path d="M9 14.5 a8.1 8.1 0 0 0 16.2 0" fill="none" stroke="#a9a9a9" stroke-width="1.7"/><path d="M17.1 23 v5 M12 28.6 h10.2" stroke="#a9a9a9" stroke-width="1.7"/><path d="M2.5 30.5 L30.5 2" stroke="#1a1a1a" stroke-width="4.5"/><path d="M2.5 30.5 L30.5 2" stroke="#e8414d" stroke-width="1.8"/></svg><svg style="position:absolute;left:106.3px;top:1032.5px;" width="11.400000000000006" height="6.700000000000003" viewBox="0 0 11.400000000000006 6.700000000000003"><path d="M1 5.70 L5.70 1 L10.40 5.70" fill="none" stroke="#d0d0d0" stroke-width="1.7"/></svg><span class="t" style="left:12.4px;top:1058.0px;font-size:16px;color:#cfcfcf;font-weight:400;font-family:'Liberation Sans', sans-serif;transform:scaleX(0.9884);">Включить звук</span><svg style="position:absolute;left:184.0px;top:1020.0px;" width="36" height="32" viewBox="0 0 36 32"><rect x="3" y="7.5" width="21.5" height="17.5" rx="3" fill="#a9a9a9"/><path d="M25.5 14 l7.5 -4.5 v13.5 l-7.5 -4.5z" fill="#a9a9a9"/><path d="M4 30.5 L32 2" stroke="#1a1a1a" stroke-width="4.5"/><path d="M4 30.5 L32 2" stroke="#e8414d" stroke-width="1.8"/></svg><svg style="position:absolute;left:254.7px;top:1032.5px;" width="11.300000000000011" height="6.650000000000006" viewBox="0 0 11.300000000000011 6.650000000000006"><path d="M1 5.65 L5.65 1 L10.30 5.65" fill="none" stroke="#d0d0d0" stroke-width="1.7"/></svg><span class="t" style="left:152.4px;top:1058.0px;font-size:16px;color:#cfcfcf;font-weight:400;font-family:'Liberation Sans', sans-serif;transform:scaleX(0.9584);">Начать видео</span><svg style="position:absolute;left:640.0px;top:1024.0px;" width="33" height="25" viewBox="0 0 33 25"><circle cx="10.5" cy="6.3" r="5.3" fill="#a9a9a9"/><path d="M1 22.5 v-2.5 a7 7 0 0 1 7 -7 h5 a7 7 0 0 1 7 7 v2.500 z" fill="#a9a9a9"/><circle cx="23.5" cy="8.6" r="4.2" fill="#a9a9a9"/><path d="M21.500 22.500 v-3 c0 -2 -0.600 -3.500 -1.700 -4.800 h4.700 a6 6 0 0 1 6 6 v1.800 z" fill="#a9a9a9"/></svg><span class="t" style="left:676.4px;top:1026.0px;font-size:15.5px;color:#d9d9d9;font-weight:400;font-family:'Liberation Sans', sans-serif;transform:scaleX(1.0062);">22</span><svg style="position:absolute;left:716.3px;top:1032.4px;" width="11.400000000000091" height="6.7000000000000455" viewBox="0 0 11.400000000000091 6.7000000000000455"><path d="M1 5.70 L5.70 1 L10.40 5.70" fill="none" stroke="#d0d0d0" stroke-width="1.7"/></svg><span class="t" style="left:618.4px;top:1058.0px;font-size:16px;color:#cfcfcf;font-weight:400;font-family:'Liberation Sans', sans-serif;transform:scaleX(0.9889);">Участники</span><svg style="position:absolute;left:780.0px;top:1024.0px;" width="28" height="25" viewBox="0 0 28 25"><path d="M5 1 h17 a4 4 0 0 1 4 4 v9 a4 4 0 0 1 -4 4 h-9.500 l-6.500 5.400 v-5.400 h-1 a4 4 0 0 1 -4 -4 v-9 a4 4 0 0 1 4 -4z" fill="#a9a9a9"/></svg><div style="position:absolute;left:798.3px;top:1019.0px;width:19.4px;height:16.5px;background:#e8384a;border-radius:5px"></div><span class="t" style="left:803.6px;top:1021.0px;font-size:13.5px;color:#fff;font-weight:700;font-family:'Liberation Sans', sans-serif;transform:translateX(0.44px);">4</span><svg style="position:absolute;left:829.0px;top:1032.5px;" width="11.299999999999955" height="6.649999999999977" viewBox="0 0 11.299999999999955 6.649999999999977"><path d="M1 5.65 L5.65 1 L10.30 5.65" fill="none" stroke="#d0d0d0" stroke-width="1.7"/></svg><span class="t" style="left:781.4px;top:1058.0px;font-size:16px;color:#cfcfcf;font-weight:400;font-family:'Liberation Sans', sans-serif;transform:scaleX(0.9319);">Чат</span><div style="position:absolute;left:924.0px;top:1025.0px;width:30.0px;height:21.7px;background:#23d959;border-radius:4px"></div><svg style="position:absolute;left:932.0px;top:1028.0px;" width="14" height="16" viewBox="0 0 14 16"><path d="M7 14 V3 M2.300 7.300 L7 2.500 L11.700 7.300" fill="none" stroke="#1c2a20" stroke-width="2"/></svg><span class="t" style="left:860.8px;top:1058.0px;font-size:16px;color:#23d959;font-weight:400;font-family:'Liberation Sans', sans-serif;transform:scaleX(0.9595);">Демонстрация экрана</span><svg style="position:absolute;left:1063.0px;top:1022.0px;" width="28" height="28" viewBox="0 0 28 28"><circle cx="14.3" cy="13.700" r="11.800" fill="none" stroke="#a9a9a9" stroke-width="1.500"/><circle cx="14.300" cy="13.700" r="8.900" fill="#a9a9a9"/></svg><span class="t" style="left:1052.4px;top:1058.0px;font-size:16px;color:#cfcfcf;font-weight:400;font-family:'Liberation Sans', sans-serif;transform:scaleX(0.9464);">Запись</span><div style="position:absolute;left:1190.0px;top:1025.0px;width:30.0px;height:21.7px;background:#a9a9a9;border-radius:4px"></div><span class="t" style="left:1195.6px;top:1030.0px;font-size:12px;color:#1a1a1a;font-weight:700;font-family:'Liberation Sans', sans-serif;transform:scaleX(1.1012);">CC</span><svg style="position:absolute;left:1259.8px;top:1032.3px;" width="12.0" height="7.0" viewBox="0 0 12.0 7.0"><path d="M1 6.00 L6.00 1 L11.00 6.00" fill="none" stroke="#d0d0d0" stroke-width="1.7"/></svg><span class="t" style="left:1137.0px;top:1058.0px;font-size:16px;color:#cfcfcf;font-weight:400;font-family:'Liberation Sans', sans-serif;transform:scaleX(0.9568);">Показать субтитры</span><svg style="position:absolute;left:1320.0px;top:1019.0px;" width="30" height="30" viewBox="0 0 30 30"><circle cx="12" cy="17" r="11" fill="#a9a9a9"/><circle cx="8.300" cy="14" r="1.500" fill="#1a1a1a"/><circle cx="15.700" cy="14" r="1.500" fill="#1a1a1a"/><path d="M6.800 19 a5.400 5.400 0 0 0 10.400 0z" fill="#1a1a1a"/><circle cx="23.500" cy="6.500" r="6" fill="#1a1a1a"/><path d="M23.500 2.800 v7.400 M19.800 6.500 h7.400" stroke="#a9a9a9" stroke-width="1.500"/></svg><span class="t" style="left:1301.6px;top:1058.0px;font-size:16px;color:#cfcfcf;font-weight:400;font-family:'Liberation Sans', sans-serif;transform:scaleX(0.9533);">Реакции</span><svg style="position:absolute;left:1426.0px;top:1025.0px;" width="24" height="24" viewBox="0 0 24 24"><g fill="none" stroke="#a9a9a9" stroke-width="1.700"><path d="M2.300 9 v-3.200 a3.500 3.500 0 0 1 3.500 -3.500 h4.700"/><path d="M21 13.500 v4 a3.500 3.500 0 0 1 -3.500 3.500 h-4"/><circle cx="17.800" cy="5.700" r="3.200"/><circle cx="5.500" cy="17.800" r="3.200"/></g></svg><span class="t" style="left:1391.1px;top:1058.0px;font-size:16px;color:#cfcfcf;font-weight:400;font-family:'Liberation Sans', sans-serif;transform:scaleX(0.9943);">Приложения</span><div style="position:absolute;left:1828.3px;top:1030.0px;width:76.3px;height:33.7px;background:#c0212b;border-radius:8px"></div><span class="t" style="left:1841.2px;top:1039.0px;font-size:15px;color:#fff;font-weight:700;font-family:'Liberation Sans', sans-serif;transform:scaleX(0.9867);">Выйти</span><div style="position:absolute;left:1620.0px;top:91.0px;width:286.0px;height:162.0px;background:#212121;border-radius:3px;box-shadow:0 2px 10px 2px rgba(0,0,0,0.35)"></div><div style="position:absolute;left:1624.5px;top:227.5px;width:156.0px;height:25.0px;background:#1b1b1b;border-radius:2px"></div><span class="t" style="left:1627.9px;top:233.0px;font-size:14.5px;color:#fff;font-weight:400;font-family:'Liberation Sans', sans-serif;transform:scaleX(1.0450);">Екатерина Федосова</span></div>
<svg style="position:absolute;left:1713.0px;top:123.0px;" width="101" height="101" viewBox="0 0 100 100"><defs><filter id="cb" x="-5%" y="-5%" width="110%" height="110%"><feGaussianBlur stdDeviation="0.8"/></filter><radialGradient id="nz" cx="0.5" cy="0.2" r="0.9"><stop offset="0" stop-color="#b09492"/><stop offset="0.4" stop-color="#7d524d"/><stop offset="1" stop-color="#43292a"/></radialGradient><linearGradient id="fc" x1="0" y1="0" x2="0" y2="1"><stop offset="0" stop-color="#fbf7ea"/><stop offset="0.7" stop-color="#f6ecd0"/><stop offset="1" stop-color="#e9c56c"/></linearGradient><clipPath id="cc"><rect width="100" height="100"/></clipPath></defs><g clip-path="url(#cc)"><rect width="100" height="100" fill="#2d8ae2"/><g filter="url(#cb)"><path d="M-2 12 C8 12 22 18 28 28 L30 45 C18 47 6 46 -2 42Z" fill="#15181a"/><path d="M64 10 C74 4 84 8 88 14 C94 10 99 8 102 6 L102 40 C94 46 84 47 72 45 L64 30Z" fill="#15181a"/><path d="M8 -1 C9 8 14 14 24 17 L28 12 C20 9 16 4 15 -1Z" fill="#d9a058"/><path d="M10 1 C11 7 14 11 20 14" stroke="#f6e6c8" stroke-width="1.500" fill="none"/><path d="M94 -1 C93 6 90 11 84 14 L79 9 C84 6 86 3 86 -1Z" fill="#d9a058"/><path d="M30 14 C34 2 46 0 54 2 C64 0 72 6 74 14 C76 22 72 30 68 36 L32 36 C28 28 28 20 30 14Z" fill="#f7f2e4"/><path d="M64 9 C70 6 78 8 82 13 L74 20 C70 16 67 13 64 9Z" fill="#1a1c1e"/><path d="M22 38 C34 31 66 31 78 38 C88 46 92 62 90 80 C88 94 76 103 50 103 C24 103 11 94 9 80 C7 62 12 46 22 38Z" fill="url(#fc)"/><path d="M70 90 C78 86 88 86 102 90 L102 102 L72 102Z" fill="#1a1c1e"/><path d="M86 90 L98 102 L91 102 L83 92Z" fill="#f1f1f1"/><path d="M20 48 C28 39 66 39 75 46 C80 56 78 74 71 84 C62 92 36 92 27 84 C19 74 16 58 20 48Z" fill="url(#nz)"/><path d="M28 47 C38 42 60 42 68 47 C60 50 38 50 28 47Z" fill="#b9a3a3" opacity="0.800"/><path d="M19 52 C24 48 30 54 29 62 C28 68 24 70 21 66 C18 62 17 56 19 52Z" fill="#f3dccc"/><path d="M20.500 54 C24 52 28 56 27 62 C26 66 23.500 67 22 64 C20 60 19.500 57 20.500 54Z" fill="#cf4527"/><ellipse cx="24.500" cy="62.500" rx="2" ry="3" fill="#3a1512"/><path d="M58 54 C60 48 70 48 73 53 C74 60 70 66 64 67 C59 66 57 60 58 54Z" fill="#f3dccc"/><path d="M60 55 C62 51 69 51 71 55 C71 60 68 64 64 64.500 C61 63 59.500 59 60 55Z" fill="#cf4527"/><ellipse cx="67" cy="60.500" rx="3" ry="2.300" fill="#3a1512" transform="rotate(-25 67 60.500)"/></g><g filter="url(#cb)"><path d="M21.50 19.25 C21.50 11.29 2.00 11.29 2.00 20.77 C2.00 29.68 13.70 34.42 21.50 42.00 C29.30 34.42 41.00 29.68 41.00 20.77 C41.00 11.29 21.50 11.29 21.50 19.25Z" transform="rotate(-10 21.5 27.5)" fill="#dfa9c0"/><path d="M69.50 18.75 C69.50 10.79 50.00 10.79 50.00 20.27 C50.00 29.18 61.70 33.92 69.50 41.50 C77.30 33.92 89.00 29.18 89.00 20.27 C89.00 10.79 69.50 10.79 69.50 18.75Z" transform="rotate(10 69.5 27)" fill="#dfa9c0"/><path d="M38 20 C44 17 48 17 54 20 L54 25 C48 22 44 22 38 25Z" fill="#dfa9c0"/><path d="M2 15 L8 18 L6 24Z M98 13 L90 17 L93 23Z" fill="#dfa9c0"/><path d="M22.00 21.46 C22.00 15.15 6.50 15.15 6.50 22.66 C6.50 29.73 15.80 33.49 22.00 39.50 C28.20 33.49 37.50 29.73 37.50 22.66 C37.50 15.15 22.00 15.15 22.00 21.46Z" transform="rotate(-10 22 28)" fill="#141a1a"/><path d="M69.00 20.96 C69.00 14.65 53.50 14.65 53.50 22.16 C53.50 29.23 62.80 32.99 69.00 39.00 C75.20 32.99 84.50 29.23 84.50 22.16 C84.50 14.65 69.00 14.65 69.00 20.96Z" transform="rotate(10 69 27.5)" fill="#141a1a"/><circle cx="33.500" cy="21.500" r="1.300" fill="#8a8060"/><circle cx="76" cy="20.500" r="1.300" fill="#8a6060"/></g></g></svg>
</body></html>
